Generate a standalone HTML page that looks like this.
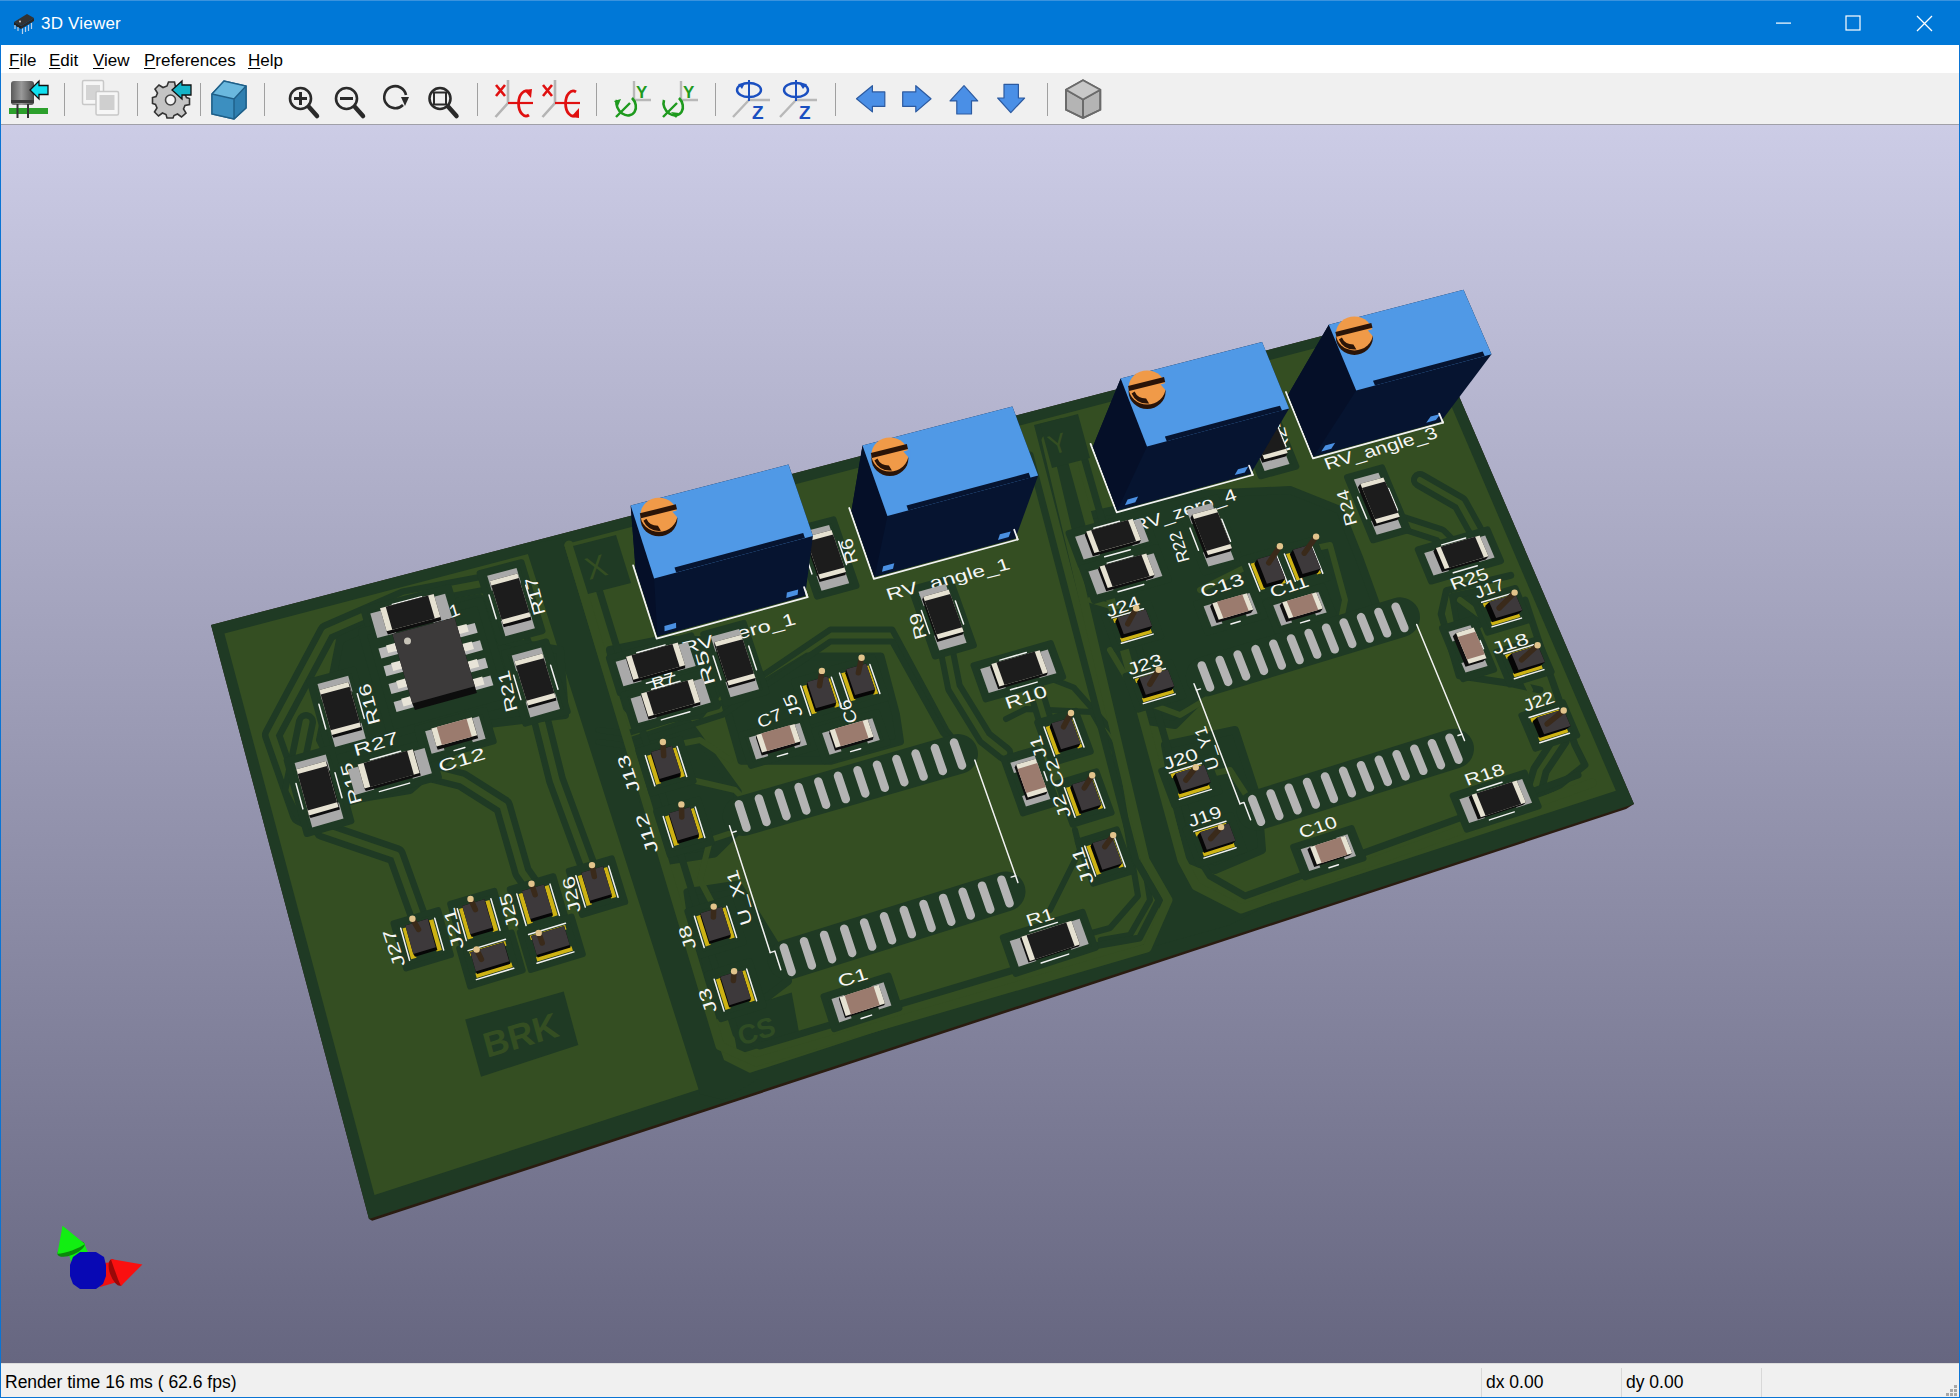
<!DOCTYPE html><html><head><meta charset="utf-8"><style>*{margin:0;padding:0;box-sizing:border-box}
html,body{width:1960px;height:1398px;overflow:hidden;background:#0a74d4;font-family:"Liberation Sans",sans-serif}
#title{position:absolute;left:0;top:0;width:1960px;height:45px;background:#0078d7;border-top:1px solid #3a93de}
#title .tt{position:absolute;left:41px;top:13px;font-size:17px;color:#fff;letter-spacing:0.2px}
#menu{position:absolute;left:1px;top:45px;width:1958px;height:28px;background:#fff}
#menu span{position:absolute;top:6px;font-size:17px;color:#000}
#menu u{text-decoration:underline;text-underline-offset:2px;text-decoration-thickness:1px}
#tool{position:absolute;left:1px;top:73px;width:1958px;height:51px;background:#f0f0f0}
#tool .s{position:absolute;top:10px;width:1px;height:33px;background:#a0a0a0}
#tool svg{position:absolute}
#canvas{position:absolute;left:1px;top:124px;width:1958px;height:1239px;background:linear-gradient(to bottom,#cccce6 0%,#666680 100%);border-top:1px solid #a0a0a8;overflow:hidden}
#canvas svg.scene{position:absolute;left:-1px;top:-125px}
#status{position:absolute;left:1px;top:1363px;width:1958px;height:34px;background:#f0f0f0;border-top:1px solid #dcdcdc}
#status span{position:absolute;top:8px;font-size:17.5px;color:#000}
#status .sep{position:absolute;top:4px;width:1px;height:29px;background:#d8d8d8}
</style></head><body><div id="title">
  <svg style="position:absolute;left:13px;top:11px" width="24" height="24" viewBox="0 0 24 24">
    <path d="M1 10 L14 2 L21 6 L8 14 Z" fill="#333"/>
    <path d="M1 10 L8 14 L8 17 L1 13 Z" fill="#222"/>
    <path d="M8 14 L21 6 L21 9 L8 17 Z" fill="#2a2a2a"/>
    <circle cx="7" cy="9.5" r="0.9" fill="#ddd"/>
    <g stroke="#b8d0ea" stroke-width="1.2">
      <line x1="2" y1="13" x2="2" y2="17"/><line x1="9.5" y1="16.5" x2="9.5" y2="22"/>
      <line x1="12.5" y1="15" x2="12.5" y2="20"/><line x1="15.5" y1="13" x2="15.5" y2="19"/>
      <line x1="18.5" y1="11" x2="18.5" y2="17"/><line x1="5" y1="15" x2="5" y2="19"/>
    </g>
  </svg>
  <span class="tt">3D Viewer</span>
  <svg style="position:absolute;left:1776px;top:21px" width="16" height="3"><rect x="0" y="0.5" width="15" height="1.2" fill="#fff"/></svg>
  <svg style="position:absolute;left:1845px;top:14px" width="17" height="17"><rect x="1" y="1" width="14" height="14" fill="none" stroke="#fff" stroke-width="1.2"/></svg>
  <svg style="position:absolute;left:1916px;top:14px" width="17" height="17"><path d="M1 1 L16 16 M16 1 L1 16" stroke="#fff" stroke-width="1.3"/></svg>
</div>
<div id="menu">
  <span style="left:8px"><u>F</u>ile</span>
  <span style="left:48px"><u>E</u>dit</span>
  <span style="left:92px"><u>V</u>iew</span>
  <span style="left:143px"><u>P</u>references</span>
  <span style="left:247px"><u>H</u>elp</span>
</div>
<div id="tool">
<svg style="left:0;top:0" width="1958" height="51" viewBox="1 73 1958 51">
 <g fill="#a0a0a0">
  <rect x="64" y="83" width="1" height="33"/><rect x="137" y="83" width="1" height="33"/>
  <rect x="200" y="83" width="1" height="33"/><rect x="264" y="83" width="1" height="33"/>
  <rect x="477" y="83" width="1" height="33"/><rect x="596" y="83" width="1" height="33"/>
  <rect x="715" y="83" width="1" height="33"/><rect x="835" y="83" width="1" height="33"/>
  <rect x="1047" y="83" width="1" height="33"/>
 </g>
 <!-- load 3d model -->
 <defs>
  <linearGradient id="cyl" x1="0" x2="1"><stop offset="0" stop-color="#5a5a5a"/><stop offset="0.45" stop-color="#9a9a9a"/><stop offset="1" stop-color="#4a4a4a"/></linearGradient>
  <linearGradient id="cubeg" x1="0" y1="0" x2="1" y2="1"><stop offset="0" stop-color="#6ab4dc"/><stop offset="1" stop-color="#2c7fb0"/></linearGradient>
 </defs>
 <rect x="11" y="81" width="23" height="24" rx="3" fill="url(#cyl)"/>
 <rect x="11" y="100" width="23" height="3" fill="#3a3a3a"/>
 <rect x="9" y="108" width="39" height="6" fill="#2ca02c"/>
 <rect x="16.5" y="104" width="2" height="14" fill="#333"/><rect x="27" y="104" width="2" height="14" fill="#333"/>
 <path d="M30 90 L39 81 L39 85.5 L48 85.5 L48 94.5 L39 94.5 L39 99 Z" fill="#10e0f0" stroke="#111" stroke-width="1.3"/>
 <!-- copy -->
 <rect x="82.5" y="80.5" width="21" height="24" rx="1.5" fill="#f6f6f6" stroke="#c8c8c8" stroke-width="1.5"/>
 <rect x="86" y="85" width="14" height="15" fill="#d4d4d4"/>
 <rect x="96" y="91.5" width="22.5" height="23.5" rx="1.5" fill="#f6f6f6" stroke="#c8c8c8" stroke-width="1.5"/>
 <rect x="99.5" y="95" width="15" height="15" fill="#cfcfcf"/>
 <!-- gear -->
 <g transform="translate(171.5,99)">
  <path d="M-3,-17 L3,-17 L4,-12 L8,-10.5 L12.5,-13.5 L16.5,-9.5 L13.5,-5 L15,-1.5 L18,-0.5 L18,5.5 L13.5,6.5 L12,10 L14.5,14 L10,18 L6,15 L2.5,16.5 L1.5,19 L-4.5,19 L-5.5,15.5 L-9,14 L-13,17 L-17,13 L-14.5,9 L-16,5.5 L-19,4.5 L-19,-1.5 L-15.5,-2.5 L-14,-6 L-16.5,-10 L-12.5,-14 L-8.5,-11.5 L-4.5,-13 Z" fill="#c4c4c4" stroke="#333" stroke-width="1.6"/>
  <circle cx="-1" cy="1" r="5" fill="#f4f4f4" stroke="#444" stroke-width="1.6"/>
 </g>
 <path d="M172 90 L182 81 L182 85 L191 85 L191 95 L182 95 L182 99 Z" fill="#14b4c8" stroke="#111" stroke-width="1.3"/>
 <!-- cube -->
 <path d="M212 94 L224 81 L246 86 L246 108 L234 119 L212 114 Z" fill="#4aa0d0" stroke="#236a94" stroke-width="1.5"/>
 <path d="M212 94 L234 99 L246 86 M234 99 L234 119" fill="none" stroke="#236a94" stroke-width="1.5"/>
 <path d="M212 94 L234 99 L234 119 L212 114 Z" fill="#3c8fc0"/>
 <path d="M234 99 L246 86 L246 108 L234 119 Z" fill="#2f7fb0"/>
 <path d="M212 94 L224 81 L246 86 L234 99 Z" fill="#6ab8de"/>
 <path d="M212 94 L224 81 L246 86 L246 108 L234 119 L212 114 Z M212 94 L234 99 L246 86 M234 99 L234 119" fill="none" stroke="#1f5f88" stroke-width="1.4"/>
 <!-- zoom icons -->
 <g fill="none" stroke="#2a2a2a" stroke-width="2.6">
  <circle cx="300.5" cy="98.5" r="10.5"/><path d="M294 98.5 H307 M300.5 92 V105" stroke-width="3"/>
  <circle cx="346.5" cy="98.5" r="10.5"/><path d="M340 98.5 H353" stroke-width="3"/>
  <path d="M403 105 A 11 11 0 1 1 406 95"/>
  <circle cx="440" cy="98.5" r="10.5"/><rect x="434" y="92.5" width="12" height="12" stroke-width="2"/>
 </g>
 <path d="M401 97 L409 97 L405 106 Z" fill="#2a2a2a"/>
 <g stroke="#2a2a2a" stroke-width="4.5" stroke-linecap="round">
  <line x1="309" y1="107" x2="317" y2="116"/><line x1="355" y1="107" x2="363" y2="116"/><line x1="448.5" y1="107" x2="456.5" y2="116"/>
 </g>
 <!-- rot X -->
 <g>
  <path d="M508 80 V103 L495.5 117" stroke="#b4b4b4" stroke-width="2.6" fill="none"/>
  <path d="M496 85 L505 96 M505 85 L496 96" stroke="#e01010" stroke-width="2.6"/>
  <path d="M508 103 H533" stroke="#e01010" stroke-width="2.2"/>
  <path d="M529 92 A 7.5 12.5 0 1 0 529 115" fill="none" stroke="#e01010" stroke-width="2.8"/>
  <path d="M524 90 L532 89 L531 98 Z" fill="#e01010"/>
  <path d="M555 80 V103 L542.5 117" stroke="#b4b4b4" stroke-width="2.6" fill="none"/>
  <path d="M543 85 L552 96 M552 85 L543 96" stroke="#e01010" stroke-width="2.6"/>
  <path d="M555 103 H580" stroke="#e01010" stroke-width="2.2"/>
  <path d="M576 92 A 7.5 12.5 0 1 0 576 115" fill="none" stroke="#e01010" stroke-width="2.8"/>
  <path d="M571 117 L579 108 L579 118 Z" fill="#e01010"/>
 </g>
 <!-- rot Y -->
 <g>
  <path d="M634 81 V100 H651" stroke="#b8b8b8" stroke-width="2.4" fill="none"/>
  <text x="636" y="97.5" font-size="17" font-weight="bold" fill="#1e9a1e" font-family="Liberation Sans">Y</text>
  <path d="M617 100 A 9 11 -35 1 0 632 98" fill="none" stroke="#1e9a1e" stroke-width="2.6"/>
  <line x1="616" y1="117" x2="630" y2="103" stroke="#1e9a1e" stroke-width="2.4"/>
  <path d="M614 101 L621 99 L618 106 Z" fill="#1e9a1e"/>
  <path d="M681 81 V100 H698" stroke="#b8b8b8" stroke-width="2.4" fill="none"/>
  <text x="683" y="97.5" font-size="17" font-weight="bold" fill="#1e9a1e" font-family="Liberation Sans">Y</text>
  <path d="M664 100 A 9 11 -35 1 0 679 98" fill="none" stroke="#1e9a1e" stroke-width="2.6"/>
  <line x1="663" y1="117" x2="677" y2="103" stroke="#1e9a1e" stroke-width="2.4"/>
  <path d="M671 112 L679 113 L676 118 Z" fill="#1e9a1e"/>
 </g>
 <!-- rot Z -->
 <g>
  <path d="M749 100 H770 M749 100 L733 117" stroke="#b8b8b8" stroke-width="2.4" fill="none"/>
  <ellipse cx="749" cy="90" rx="12" ry="7" fill="none" stroke="#1a4fc0" stroke-width="2.4"/>
  <line x1="749" y1="80" x2="749" y2="101" stroke="#1a4fc0" stroke-width="2"/>
  <path d="M738 84 L745 83 L742 89 Z" fill="#1a4fc0"/>
  <text x="752" y="118.5" font-size="19" font-weight="bold" fill="#1a4fc0" font-family="Liberation Sans">Z</text>
  <path d="M796 100 H817 M796 100 L780 117" stroke="#b8b8b8" stroke-width="2.4" fill="none"/>
  <ellipse cx="796" cy="90" rx="12" ry="7" fill="none" stroke="#1a4fc0" stroke-width="2.4"/>
  <line x1="796" y1="80" x2="796" y2="101" stroke="#1a4fc0" stroke-width="2"/>
  <path d="M799 83 L807 84 L803 89 Z" fill="#1a4fc0"/>
  <text x="799" y="118.5" font-size="19" font-weight="bold" fill="#1a4fc0" font-family="Liberation Sans">Z</text>
 </g>
 <!-- arrows -->
 <g fill="#4a8fe6" stroke="#2c5aa0" stroke-width="1.2" stroke-linejoin="round">
  <path d="M856.5 98.8 L872.4 85.7 L872.4 91.9 L884.8 91.9 L884.8 106.4 L872.4 106.4 L872.4 111.9 Z"/>
  <path d="M931 98.8 L915.8 85.7 L915.8 91.9 L902.7 91.9 L902.7 106.4 L915.8 106.4 L915.8 111.9 Z"/>
  <path d="M964 85.7 L950 100.9 L956.8 100.9 L956.8 114 L971.5 114 L971.5 100.9 L977.7 100.9 Z"/>
  <path d="M1010.8 112.6 L997.7 98 L1004 98 L1004 84.3 L1018.4 84.3 L1018.4 98 L1024.6 98 Z"/>
 </g>
 <!-- iso cube -->
 <path d="M1083 80.2 L1100.3 89.8 L1100.3 109.8 L1083 118 L1066 109.8 L1066 89.8 Z" fill="#b4b4b4" stroke="#6a6a6a" stroke-width="1.8"/>
 <path d="M1066 89.8 L1083 99.5 L1100.3 89.8 M1083 99.5 L1083 118" fill="none" stroke="#6a6a6a" stroke-width="1.8"/>
 <path d="M1066 89.8 L1083 80.2 L1100.3 89.8 L1083 99.5 Z" fill="#c8c8c8"/>
 <path d="M1083 80.2 L1100.3 89.8 L1100.3 109.8 L1083 118 L1066 109.8 L1066 89.8 Z M1066 89.8 L1083 99.5 L1100.3 89.8 M1083 99.5 L1083 118" fill="none" stroke="#6a6a6a" stroke-width="1.8"/>
</svg>

</div>
<div id="canvas">
<svg class="scene" width="1960" height="1398" viewBox="0 0 1960 1398"><polygon points="211.0,625.0 1422.0,310.0 1634.0,804.0 1626.1,809.1 372.2,1220.8 369.0,1219.0" fill="#2a1c10" />
<polygon points="211.0,625.0 1422.0,310.0 1634.0,804.0 369.0,1219.0" fill="#1f3a24" />
<polygon points="224.4,633.4 1415.4,322.1 1615.9,790.8 374.5,1195.1" fill="#344e22" />
<polygon points="525.0,545.0 562.0,538.0 706.0,1008.0 724.0,1060.0 760.0,1078.0 724.0,1100.0 700.0,1094.0" fill="#1f3a24" />
<polygon points="1034.0,425.0 1062.0,418.0 1188.0,880.0 1200.0,905.0 1160.0,910.0" fill="#1f3a24" />
<polygon points="629.5,741.5 687.5,722.2 737.7,791.7 738.0,830.4 714.5,853.5 664.3,861.3 645.0,807.2" fill="#1f3a24" stroke="#1f3a24" stroke-width="8" stroke-linejoin="round"/>
<polygon points="687.5,892.2 737.7,884.5 776.3,946.3 788.0,981.0 753.0,1008.0 714.5,1015.8 699.0,969.5" fill="#1f3a24" stroke="#1f3a24" stroke-width="8" stroke-linejoin="round"/>
<polygon points="726.0,706.8 807.2,656.6 880.6,656.6 896.0,714.5 900.0,741.5 830.4,760.8 741.5,760.8" fill="#1f3a24" stroke="#1f3a24" stroke-width="8" stroke-linejoin="round"/>
<polygon points="610.0,650.0 660.0,640.0 700.0,640.0 720.0,690.0 700.0,715.0 640.0,722.0 620.0,700.0" fill="#1f3a24" stroke="#1f3a24" stroke-width="8" stroke-linejoin="round"/>
<polygon points="730.0,1012.0 791.7,992.6 799.5,1035.0 737.7,1054.4" fill="#1f3a24" />
<polyline points="598.6,729.9 625.7,733.8 722.2,702.9 830.4,629.5 892.2,629.5 946.3,730.0 969.5,760.8" fill="none" stroke="#1f3a24" stroke-width="6" stroke-linejoin="round" stroke-linecap="round" />
<polyline points="598.6,741.9 625.7,745.8 722.2,714.9 830.4,641.5 892.2,641.5 942.7,732.4 969.5,760.8" fill="none" stroke="#1f3a24" stroke-width="6" stroke-linejoin="round" stroke-linecap="round" />
<polyline points="1100.7,940.0 1130.0,935.0 1150.0,899.9 1125.0,745.4 1073.7,687.5 1004.2,660.4" fill="none" stroke="#1f3a24" stroke-width="6" stroke-linejoin="round" stroke-linecap="round" />
<polyline points="1030.0,950.0 1110.0,928.0 1138.0,896.0 1114.0,750.0 1092.0,712.0 1026.0,709.0 1006.0,719.0" fill="none" stroke="#1f3a24" stroke-width="6" stroke-linejoin="round" stroke-linecap="round" />
<polyline points="1050.0,910.0 1080.0,850.0 1075.0,830.0" fill="none" stroke="#1f3a24" stroke-width="6" stroke-linejoin="round" stroke-linecap="round" />
<polyline points="946.3,648.8 954.0,687.5 984.9,737.7 1004.2,753.0" fill="none" stroke="#1f3a24" stroke-width="18" stroke-linejoin="round" stroke-linecap="round" />
<polyline points="946.3,648.8 954.0,687.5 984.9,737.7 1004.2,753.0" fill="none" stroke="#344e22" stroke-width="6" stroke-linejoin="round" stroke-linecap="round" />
<polyline points="1035.0,687.5 1046.7,726.0" fill="none" stroke="#1f3a24" stroke-width="18" stroke-linejoin="round" stroke-linecap="round" />
<polyline points="1035.0,687.5 1046.7,726.0" fill="none" stroke="#344e22" stroke-width="6" stroke-linejoin="round" stroke-linecap="round" />
<polyline points="640.0,752.0 700.0,740.0 730.0,760.0" fill="none" stroke="#344e22" stroke-width="6" stroke-linejoin="round" stroke-linecap="round" />
<polyline points="683.0,778.0 735.0,790.0 745.0,800.0" fill="none" stroke="#344e22" stroke-width="6" stroke-linejoin="round" stroke-linecap="round" />
<polyline points="740.0,830.0 710.0,840.0 700.0,880.0 720.0,918.0" fill="none" stroke="#344e22" stroke-width="6" stroke-linejoin="round" stroke-linecap="round" />
<polygon points="1070.0,520.0 1180.0,495.0 1290.0,490.0 1340.0,510.0 1360.0,560.0 1380.0,615.0 1400.0,625.0 1205.0,676.0 1200.0,700.0 1175.0,725.0 1140.0,720.0 1110.0,650.0 1080.0,580.0" fill="#1f3a24" stroke="#1f3a24" stroke-width="8" stroke-linejoin="round"/>
<polygon points="1165.0,745.0 1235.0,730.0 1258.0,800.0 1262.0,850.0 1215.0,870.0 1190.0,860.0 1175.0,800.0" fill="#1f3a24" stroke="#1f3a24" stroke-width="8" stroke-linejoin="round"/>
<polyline points="1510.7,575.3 1446.4,590.7 1441.2,613.9 1459.2,675.7 1510.7,683.5 1540.0,690.0" fill="none" stroke="#1f3a24" stroke-width="7" stroke-linejoin="round" stroke-linecap="round" />
<polyline points="1525.0,600.0 1545.0,660.0 1575.0,745.0 1585.0,765.0 1560.0,785.0 1534.0,796.8" fill="none" stroke="#1f3a24" stroke-width="7" stroke-linejoin="round" stroke-linecap="round" />
<polyline points="1554.5,737.5 1534.0,768.4 1526.2,794.2" fill="none" stroke="#1f3a24" stroke-width="7" stroke-linejoin="round" stroke-linecap="round" />
<polyline points="1566.0,742.0 1546.0,772.0 1540.0,796.0" fill="none" stroke="#1f3a24" stroke-width="7" stroke-linejoin="round" stroke-linecap="round" />
<polygon points="1452.0,596.0 1480.0,590.0 1486.0,620.0 1460.0,640.0" fill="#1f3a24" stroke="#1f3a24" stroke-width="6" stroke-linejoin="round"/>
<polyline points="1420.0,480.0 1460.0,503.0 1475.0,530.0 1478.0,545.0" fill="none" stroke="#1f3a24" stroke-width="18" stroke-linejoin="round" stroke-linecap="round" />
<polyline points="1420.0,480.0 1460.0,503.0 1475.0,530.0 1478.0,545.0" fill="none" stroke="#344e22" stroke-width="6" stroke-linejoin="round" stroke-linecap="round" />
<polyline points="1400.0,522.0 1440.0,535.0 1455.0,550.0" fill="none" stroke="#1f3a24" stroke-width="18" stroke-linejoin="round" stroke-linecap="round" />
<polyline points="1400.0,522.0 1440.0,535.0 1455.0,550.0" fill="none" stroke="#344e22" stroke-width="6" stroke-linejoin="round" stroke-linecap="round" />
<polygon points="1080.0,967.0 1147.0,948.0 1168.0,900.0 1145.0,860.0 1046.0,440.0 1064.0,430.0 1182.0,860.0 1196.0,886.0 1241.0,909.0 1290.0,893.0 1230.0,925.0" fill="#1f3a24" />
<polyline points="569.0,545.0 720.0,1046.0 756.0,1062.0 1147.0,948.0 1168.0,900.0 1145.0,860.0 1046.0,440.0" fill="none" stroke="#344e22" stroke-width="9" stroke-linejoin="round" stroke-linecap="round" />
<polyline points="590.0,560.0 736.0,1034.0 760.0,1046.0 1094.0,946.0 1139.5,938.0 1159.0,900.0 1135.8,860.0 1030.0,455.0" fill="none" stroke="#1f3a24" stroke-width="7" stroke-linejoin="round" stroke-linecap="round" />
<polyline points="1064.0,430.0 1182.0,860.0 1196.0,886.0 1241.0,909.0 1592.0,783.0" fill="none" stroke="#344e22" stroke-width="9" stroke-linejoin="round" stroke-linecap="round" />
<polyline points="1082.0,450.0 1200.0,860.0 1210.0,876.0 1245.0,896.0 1578.0,775.0" fill="none" stroke="#1f3a24" stroke-width="7" stroke-linejoin="round" stroke-linecap="round" />
<polyline points="1090.0,600.0 1130.0,612.0" fill="none" stroke="#344e22" stroke-width="6" stroke-linejoin="round" stroke-linecap="round" />
<polyline points="1110.0,650.0 1140.0,700.0 1180.0,715.0 1205.0,700.0" fill="none" stroke="#344e22" stroke-width="6" stroke-linejoin="round" stroke-linecap="round" />
<polyline points="1200.0,590.0 1260.0,560.0 1330.0,545.0 1345.0,600.0 1340.0,625.0" fill="none" stroke="#344e22" stroke-width="6" stroke-linejoin="round" stroke-linecap="round" />
<polyline points="1180.0,780.0 1230.0,770.0 1256.0,810.0" fill="none" stroke="#344e22" stroke-width="6" stroke-linejoin="round" stroke-linecap="round" />
<polyline points="1460.0,600.0 1500.0,630.0 1530.0,690.0" fill="none" stroke="#344e22" stroke-width="6" stroke-linejoin="round" stroke-linecap="round" />
<polygon points="573.0,546.0 616.0,535.0 631.0,583.0 588.0,594.0" fill="#1f3a24" />
<text x="0" y="0" font-family="Liberation Sans" font-size="30" fill="#344e22" transform="matrix(1,-0.27,0.3,1,589,580)">X</text>
<polygon points="1040.0,424.0 1078.0,414.0 1090.0,458.0 1052.0,468.0" fill="#1f3a24" />
<text x="0" y="0" font-family="Liberation Sans" font-size="26" fill="#344e22" transform="matrix(1,-0.27,0.33,1,1052,455)">Y</text>
<polygon points="465.2,1019.5 563.7,991.6 578.3,1045.0 481.0,1076.7" fill="#1f3a24" />
<text x="0" y="0" font-family="Liberation Sans" font-weight="bold" font-size="34" fill="#344e22" transform="matrix(1,-0.3,0.27,1,487,1058)">BRK</text>
<text x="0" y="0" font-family="Liberation Sans" font-weight="bold" font-size="26" fill="#2f4c24" transform="matrix(1,-0.33,0.3,1,741,1046)">CS</text>
<polyline points="323.0,826.0 300.0,815.0 272.0,735.0 327.0,632.0 405.0,598.0 490.0,582.0 510.0,590.0" fill="none" stroke="#1f3a24" stroke-width="20" stroke-linejoin="round" stroke-linecap="round" />
<polyline points="323.0,826.0 300.0,815.0 272.0,735.0 327.0,632.0 405.0,598.0 490.0,582.0 510.0,590.0" fill="none" stroke="#344e22" stroke-width="7" stroke-linejoin="round" stroke-linecap="round" />
<polyline points="306.0,722.0 292.0,790.0 303.0,812.0" fill="none" stroke="#1f3a24" stroke-width="20" stroke-linejoin="round" stroke-linecap="round" />
<polyline points="306.0,722.0 292.0,790.0 303.0,812.0" fill="none" stroke="#344e22" stroke-width="7" stroke-linejoin="round" stroke-linecap="round" />
<polyline points="323.0,830.0 396.0,855.0 418.0,916.0 422.0,930.0" fill="none" stroke="#1f3a24" stroke-width="20" stroke-linejoin="round" stroke-linecap="round" />
<polyline points="323.0,830.0 396.0,855.0 418.0,916.0 422.0,930.0" fill="none" stroke="#344e22" stroke-width="7" stroke-linejoin="round" stroke-linecap="round" />
<polyline points="430.0,772.0 462.0,780.0 503.0,806.0 522.0,872.0 536.0,892.0" fill="none" stroke="#1f3a24" stroke-width="20" stroke-linejoin="round" stroke-linecap="round" />
<polyline points="430.0,772.0 462.0,780.0 503.0,806.0 522.0,872.0 536.0,892.0" fill="none" stroke="#344e22" stroke-width="7" stroke-linejoin="round" stroke-linecap="round" />
<polyline points="540.0,716.0 556.0,780.0 590.0,872.0 597.0,886.0" fill="none" stroke="#1f3a24" stroke-width="20" stroke-linejoin="round" stroke-linecap="round" />
<polyline points="540.0,716.0 556.0,780.0 590.0,872.0 597.0,886.0" fill="none" stroke="#344e22" stroke-width="7" stroke-linejoin="round" stroke-linecap="round" />
<polyline points="515.0,625.0 530.0,665.0" fill="none" stroke="#1f3a24" stroke-width="20" stroke-linejoin="round" stroke-linecap="round" />
<polyline points="515.0,625.0 530.0,665.0" fill="none" stroke="#344e22" stroke-width="7" stroke-linejoin="round" stroke-linecap="round" />
<polygon points="340.0,640.0 400.0,612.0 480.0,598.0 500.0,640.0 560.0,650.0 565.0,715.0 480.0,725.0 445.0,760.0 410.0,790.0 350.0,800.0 320.0,740.0" fill="#1f3a24" stroke="#1f3a24" stroke-width="8" stroke-linejoin="round"/>
<polygon points="363.4,609.7 448.9,587.2 459.2,621.9 373.4,644.8" fill="#1f3a24" stroke="#1f3a24" stroke-width="6" stroke-linejoin="round"/>
<polygon points="362.1,632.2 391.2,734.6 509.8,701.7 479.7,601.1" fill="#1f3a24" stroke="#1f3a24" stroke-width="8" stroke-linejoin="round"/>
<polygon points="479.6,573.1 500.4,642.4 542.5,631.0 521.5,562.2" fill="#1f3a24" stroke="#1f3a24" stroke-width="6" stroke-linejoin="round"/>
<polygon points="504.1,653.0 525.3,723.6 567.7,711.7 546.2,641.5" fill="#1f3a24" stroke="#1f3a24" stroke-width="6" stroke-linejoin="round"/>
<polygon points="309.7,681.4 329.6,753.5 373.7,741.3 353.5,669.6" fill="#1f3a24" stroke="#1f3a24" stroke-width="6" stroke-linejoin="round"/>
<polygon points="286.7,760.3 306.7,834.0 351.4,821.2 331.2,748.0" fill="#1f3a24" stroke="#1f3a24" stroke-width="6" stroke-linejoin="round"/>
<polygon points="340.8,765.5 428.5,741.1 438.9,777.2 350.9,802.1" fill="#1f3a24" stroke="#1f3a24" stroke-width="6" stroke-linejoin="round"/>
<polygon points="417.0,728.7 484.4,710.0 493.7,741.3 426.1,760.3" fill="#1f3a24" stroke="#1f3a24" stroke-width="6" stroke-linejoin="round"/>
<polygon points="393.5,923.4 406.1,968.5 450.9,955.0 438.1,910.1" fill="#1f3a24" stroke="#1f3a24" stroke-width="6" stroke-linejoin="round"/>
<polygon points="450.2,903.9 463.0,948.7 507.2,935.3 494.3,890.8" fill="#1f3a24" stroke="#1f3a24" stroke-width="6" stroke-linejoin="round"/>
<polygon points="509.8,889.1 522.8,933.5 566.4,920.3 553.3,876.2" fill="#1f3a24" stroke="#1f3a24" stroke-width="6" stroke-linejoin="round"/>
<polygon points="568.8,871.0 582.1,915.0 625.2,902.0 611.8,858.3" fill="#1f3a24" stroke="#1f3a24" stroke-width="6" stroke-linejoin="round"/>
<polygon points="459.2,948.4 511.7,932.6 522.7,970.3 470.1,986.5" fill="#1f3a24" stroke="#1f3a24" stroke-width="6" stroke-linejoin="round"/>
<polygon points="519.8,932.3 571.6,916.6 582.8,954.1 530.8,970.0" fill="#1f3a24" stroke="#1f3a24" stroke-width="6" stroke-linejoin="round"/>
<polygon points="608.9,658.1 691.3,635.4 702.5,669.9 619.8,693.0" fill="#1f3a24" stroke="#1f3a24" stroke-width="6" stroke-linejoin="round"/>
<polygon points="623.7,694.6 706.3,671.5 717.6,706.3 634.8,729.9" fill="#1f3a24" stroke="#1f3a24" stroke-width="6" stroke-linejoin="round"/>
<polygon points="703.2,634.1 725.7,703.4 766.5,691.8 743.8,622.9" fill="#1f3a24" stroke="#1f3a24" stroke-width="6" stroke-linejoin="round"/>
<polygon points="794.0,681.4 807.8,722.6 848.0,711.0 834.1,670.0" fill="#1f3a24" stroke="#1f3a24" stroke-width="6" stroke-linejoin="round"/>
<polygon points="832.8,668.6 846.7,709.5 886.6,698.0 872.6,657.3" fill="#1f3a24" stroke="#1f3a24" stroke-width="6" stroke-linejoin="round"/>
<polygon points="741.0,735.0 804.7,716.7 814.9,747.3 751.0,765.9" fill="#1f3a24" stroke="#1f3a24" stroke-width="6" stroke-linejoin="round"/>
<polygon points="814.3,730.4 877.1,712.2 887.6,742.6 824.6,761.1" fill="#1f3a24" stroke="#1f3a24" stroke-width="6" stroke-linejoin="round"/>
<polygon points="638.4,750.9 651.7,793.3 693.6,781.1 680.1,738.9" fill="#1f3a24" stroke="#1f3a24" stroke-width="6" stroke-linejoin="round"/>
<polygon points="656.2,811.7 669.7,854.8 711.8,842.3 698.2,799.4" fill="#1f3a24" stroke="#1f3a24" stroke-width="6" stroke-linejoin="round"/>
<polygon points="687.4,911.3 701.2,955.5 743.6,942.3 729.7,898.4" fill="#1f3a24" stroke="#1f3a24" stroke-width="6" stroke-linejoin="round"/>
<polygon points="707.1,974.4 721.1,1019.2 763.7,1005.6 749.6,961.1" fill="#1f3a24" stroke="#1f3a24" stroke-width="6" stroke-linejoin="round"/>
<polygon points="823.5,996.3 888.5,975.5 899.4,1008.1 834.2,1029.2" fill="#1f3a24" stroke="#1f3a24" stroke-width="6" stroke-linejoin="round"/>
<polygon points="1002.8,937.3 1082.6,911.8 1095.6,947.9 1015.6,973.8" fill="#1f3a24" stroke="#1f3a24" stroke-width="6" stroke-linejoin="round"/>
<polygon points="1003.4,758.8 1022.9,813.4 1057.2,802.9 1037.6,748.5" fill="#1f3a24" stroke="#1f3a24" stroke-width="6" stroke-linejoin="round"/>
<polygon points="1037.2,722.4 1052.0,763.3 1090.8,751.6 1075.8,710.9" fill="#1f3a24" stroke="#1f3a24" stroke-width="6" stroke-linejoin="round"/>
<polygon points="1057.6,783.1 1072.7,824.7 1111.6,812.7 1096.4,771.3" fill="#1f3a24" stroke="#1f3a24" stroke-width="6" stroke-linejoin="round"/>
<polygon points="1077.8,841.5 1093.1,883.7 1132.2,871.3 1116.8,829.4" fill="#1f3a24" stroke="#1f3a24" stroke-width="6" stroke-linejoin="round"/>
<polygon points="794.2,529.7 817.0,596.6 856.5,585.8 833.5,519.3" fill="#1f3a24" stroke="#1f3a24" stroke-width="6" stroke-linejoin="round"/>
<polygon points="911.2,589.1 934.9,656.5 973.9,645.4 950.0,578.4" fill="#1f3a24" stroke="#1f3a24" stroke-width="6" stroke-linejoin="round"/>
<polygon points="973.5,665.3 1050.7,643.1 1063.1,676.9 985.7,699.4" fill="#1f3a24" stroke="#1f3a24" stroke-width="6" stroke-linejoin="round"/>
<polygon points="1068.6,533.1 1143.0,512.6 1155.4,544.9 1080.8,565.7" fill="#1f3a24" stroke="#1f3a24" stroke-width="6" stroke-linejoin="round"/>
<polygon points="1081.9,567.9 1156.4,547.1 1168.9,579.7 1094.2,600.9" fill="#1f3a24" stroke="#1f3a24" stroke-width="6" stroke-linejoin="round"/>
<polygon points="1179.4,507.6 1204.5,572.3 1241.1,561.9 1215.8,497.6" fill="#1f3a24" stroke="#1f3a24" stroke-width="6" stroke-linejoin="round"/>
<polygon points="1242.4,559.3 1257.6,597.9 1294.0,587.3 1278.7,549.0" fill="#1f3a24" stroke="#1f3a24" stroke-width="6" stroke-linejoin="round"/>
<polygon points="1277.9,549.7 1293.2,588.1 1329.3,577.7 1313.9,539.5" fill="#1f3a24" stroke="#1f3a24" stroke-width="6" stroke-linejoin="round"/>
<polygon points="1196.2,603.7 1253.6,587.2 1264.9,615.8 1207.4,632.6" fill="#1f3a24" stroke="#1f3a24" stroke-width="6" stroke-linejoin="round"/>
<polygon points="1265.9,602.8 1322.5,586.4 1334.0,614.8 1277.2,631.5" fill="#1f3a24" stroke="#1f3a24" stroke-width="6" stroke-linejoin="round"/>
<polygon points="1103.9,615.8 1148.5,603.1 1161.1,636.2 1116.4,649.1" fill="#1f3a24" stroke="#1f3a24" stroke-width="6" stroke-linejoin="round"/>
<polygon points="1125.6,675.8 1170.4,662.6 1183.2,696.2 1138.3,709.6" fill="#1f3a24" stroke="#1f3a24" stroke-width="6" stroke-linejoin="round"/>
<polygon points="1347.0,477.1 1373.0,540.3 1408.3,530.2 1382.1,467.3" fill="#1f3a24" stroke="#1f3a24" stroke-width="6" stroke-linejoin="round"/>
<polygon points="1417.8,549.5 1487.5,529.4 1501.0,561.0 1431.1,581.5" fill="#1f3a24" stroke="#1f3a24" stroke-width="6" stroke-linejoin="round"/>
<polygon points="1474.1,600.3 1515.4,588.0 1529.1,620.1 1487.6,632.6" fill="#1f3a24" stroke="#1f3a24" stroke-width="6" stroke-linejoin="round"/>
<polygon points="1442.0,628.0 1463.1,679.1 1494.1,669.6 1472.8,618.8" fill="#1f3a24" stroke="#1f3a24" stroke-width="6" stroke-linejoin="round"/>
<polygon points="1496.2,651.8 1537.7,639.1 1551.6,671.6 1509.9,684.5" fill="#1f3a24" stroke="#1f3a24" stroke-width="6" stroke-linejoin="round"/>
<polygon points="1521.4,715.4 1563.1,702.4 1577.2,735.4 1535.4,748.6" fill="#1f3a24" stroke="#1f3a24" stroke-width="6" stroke-linejoin="round"/>
<polygon points="1452.7,795.6 1524.6,772.6 1538.6,806.4 1466.7,829.7" fill="#1f3a24" stroke="#1f3a24" stroke-width="6" stroke-linejoin="round"/>
<polygon points="1161.3,770.9 1206.4,757.1 1219.5,791.5 1174.3,805.5" fill="#1f3a24" stroke="#1f3a24" stroke-width="6" stroke-linejoin="round"/>
<polygon points="1185.7,829.3 1231.0,815.1 1244.2,849.9 1198.9,864.4" fill="#1f3a24" stroke="#1f3a24" stroke-width="6" stroke-linejoin="round"/>
<polygon points="1293.2,846.8 1351.6,828.1 1363.5,858.4 1305.0,877.4" fill="#1f3a24" stroke="#1f3a24" stroke-width="6" stroke-linejoin="round"/>
<polygon points="1235.7,413.6 1260.8,476.3 1296.4,466.5 1271.2,404.1" fill="#1f3a24" stroke="#1f3a24" stroke-width="6" stroke-linejoin="round"/>
<polyline points="742.7,816.0 958.0,754.0" fill="none" stroke="#1f3a24" stroke-width="40" stroke-linejoin="round" stroke-linecap="round" stroke-linecap="round"/>
<polyline points="787.7,959.7 1005.5,891.5" fill="none" stroke="#1f3a24" stroke-width="40" stroke-linejoin="round" stroke-linecap="round" stroke-linecap="round"/>
<polyline points="1205.9,676.4 1400.0,617.3" fill="none" stroke="#1f3a24" stroke-width="40" stroke-linejoin="round" stroke-linecap="round" stroke-linecap="round"/>
<polyline points="1256.6,810.4 1454.0,748.7" fill="none" stroke="#1f3a24" stroke-width="40" stroke-linejoin="round" stroke-linecap="round" stroke-linecap="round"/>
<polyline points="738.9,804.2 746.5,827.8" fill="none" stroke="#b4b4b4" stroke-width="8.5" stroke-linejoin="round" stroke-linecap="round" />
<polyline points="758.9,798.5 766.5,822.0" fill="none" stroke="#b4b4b4" stroke-width="8.5" stroke-linejoin="round" stroke-linecap="round" />
<polyline points="778.8,792.8 786.5,816.2" fill="none" stroke="#b4b4b4" stroke-width="8.5" stroke-linejoin="round" stroke-linecap="round" />
<polyline points="798.6,787.1 806.3,810.5" fill="none" stroke="#b4b4b4" stroke-width="8.5" stroke-linejoin="round" stroke-linecap="round" />
<polyline points="818.3,781.5 826.1,804.8" fill="none" stroke="#b4b4b4" stroke-width="8.5" stroke-linejoin="round" stroke-linecap="round" />
<polyline points="838.0,775.8 845.8,799.1" fill="none" stroke="#b4b4b4" stroke-width="8.5" stroke-linejoin="round" stroke-linecap="round" />
<polyline points="857.5,770.2 865.3,793.4" fill="none" stroke="#b4b4b4" stroke-width="8.5" stroke-linejoin="round" stroke-linecap="round" />
<polyline points="877.0,764.7 884.8,787.8" fill="none" stroke="#b4b4b4" stroke-width="8.5" stroke-linejoin="round" stroke-linecap="round" />
<polyline points="896.4,759.1 904.3,782.2" fill="none" stroke="#b4b4b4" stroke-width="8.5" stroke-linejoin="round" stroke-linecap="round" />
<polyline points="915.6,753.6 923.6,776.6" fill="none" stroke="#b4b4b4" stroke-width="8.5" stroke-linejoin="round" stroke-linecap="round" />
<polyline points="934.9,748.1 942.8,771.0" fill="none" stroke="#b4b4b4" stroke-width="8.5" stroke-linejoin="round" stroke-linecap="round" />
<polyline points="954.0,742.6 962.0,765.4" fill="none" stroke="#b4b4b4" stroke-width="8.5" stroke-linejoin="round" stroke-linecap="round" />
<polyline points="783.8,947.5 791.6,971.9" fill="none" stroke="#b4b4b4" stroke-width="8.5" stroke-linejoin="round" stroke-linecap="round" />
<polyline points="804.0,941.2 811.9,965.5" fill="none" stroke="#b4b4b4" stroke-width="8.5" stroke-linejoin="round" stroke-linecap="round" />
<polyline points="824.1,934.9 832.1,959.2" fill="none" stroke="#b4b4b4" stroke-width="8.5" stroke-linejoin="round" stroke-linecap="round" />
<polyline points="844.2,928.7 852.2,952.9" fill="none" stroke="#b4b4b4" stroke-width="8.5" stroke-linejoin="round" stroke-linecap="round" />
<polyline points="864.1,922.5 872.2,946.6" fill="none" stroke="#b4b4b4" stroke-width="8.5" stroke-linejoin="round" stroke-linecap="round" />
<polyline points="884.0,916.3 892.1,940.3" fill="none" stroke="#b4b4b4" stroke-width="8.5" stroke-linejoin="round" stroke-linecap="round" />
<polyline points="903.8,910.1 911.9,934.1" fill="none" stroke="#b4b4b4" stroke-width="8.5" stroke-linejoin="round" stroke-linecap="round" />
<polyline points="923.5,904.0 931.6,927.9" fill="none" stroke="#b4b4b4" stroke-width="8.5" stroke-linejoin="round" stroke-linecap="round" />
<polyline points="943.1,897.9 951.3,921.7" fill="none" stroke="#b4b4b4" stroke-width="8.5" stroke-linejoin="round" stroke-linecap="round" />
<polyline points="962.6,891.8 970.8,915.5" fill="none" stroke="#b4b4b4" stroke-width="8.5" stroke-linejoin="round" stroke-linecap="round" />
<polyline points="982.0,885.7 990.3,909.4" fill="none" stroke="#b4b4b4" stroke-width="8.5" stroke-linejoin="round" stroke-linecap="round" />
<polyline points="1001.4,879.7 1009.6,903.3" fill="none" stroke="#b4b4b4" stroke-width="8.5" stroke-linejoin="round" stroke-linecap="round" />
<polyline points="1201.7,665.4 1210.1,687.4" fill="none" stroke="#b4b4b4" stroke-width="8.5" stroke-linejoin="round" stroke-linecap="round" />
<polyline points="1219.7,660.0 1228.2,681.9" fill="none" stroke="#b4b4b4" stroke-width="8.5" stroke-linejoin="round" stroke-linecap="round" />
<polyline points="1237.6,654.5 1246.1,676.4" fill="none" stroke="#b4b4b4" stroke-width="8.5" stroke-linejoin="round" stroke-linecap="round" />
<polyline points="1255.5,649.1 1264.0,670.9" fill="none" stroke="#b4b4b4" stroke-width="8.5" stroke-linejoin="round" stroke-linecap="round" />
<polyline points="1273.3,643.7 1281.8,665.5" fill="none" stroke="#b4b4b4" stroke-width="8.5" stroke-linejoin="round" stroke-linecap="round" />
<polyline points="1291.0,638.4 1299.6,660.0" fill="none" stroke="#b4b4b4" stroke-width="8.5" stroke-linejoin="round" stroke-linecap="round" />
<polyline points="1308.6,633.0 1317.2,654.6" fill="none" stroke="#b4b4b4" stroke-width="8.5" stroke-linejoin="round" stroke-linecap="round" />
<polyline points="1326.1,627.7 1334.8,649.3" fill="none" stroke="#b4b4b4" stroke-width="8.5" stroke-linejoin="round" stroke-linecap="round" />
<polyline points="1343.6,622.4 1352.3,643.9" fill="none" stroke="#b4b4b4" stroke-width="8.5" stroke-linejoin="round" stroke-linecap="round" />
<polyline points="1361.0,617.1 1369.7,638.6" fill="none" stroke="#b4b4b4" stroke-width="8.5" stroke-linejoin="round" stroke-linecap="round" />
<polyline points="1378.4,611.9 1387.1,633.3" fill="none" stroke="#b4b4b4" stroke-width="8.5" stroke-linejoin="round" stroke-linecap="round" />
<polyline points="1395.6,606.7 1404.4,628.0" fill="none" stroke="#b4b4b4" stroke-width="8.5" stroke-linejoin="round" stroke-linecap="round" />
<polyline points="1252.2,799.1 1261.0,821.8" fill="none" stroke="#b4b4b4" stroke-width="8.5" stroke-linejoin="round" stroke-linecap="round" />
<polyline points="1270.6,793.4 1279.3,816.0" fill="none" stroke="#b4b4b4" stroke-width="8.5" stroke-linejoin="round" stroke-linecap="round" />
<polyline points="1288.8,787.7 1297.6,810.3" fill="none" stroke="#b4b4b4" stroke-width="8.5" stroke-linejoin="round" stroke-linecap="round" />
<polyline points="1307.0,782.0 1315.8,804.5" fill="none" stroke="#b4b4b4" stroke-width="8.5" stroke-linejoin="round" stroke-linecap="round" />
<polyline points="1325.0,776.4 1333.9,798.9" fill="none" stroke="#b4b4b4" stroke-width="8.5" stroke-linejoin="round" stroke-linecap="round" />
<polyline points="1343.1,770.8 1351.9,793.2" fill="none" stroke="#b4b4b4" stroke-width="8.5" stroke-linejoin="round" stroke-linecap="round" />
<polyline points="1361.0,765.2 1369.9,787.6" fill="none" stroke="#b4b4b4" stroke-width="8.5" stroke-linejoin="round" stroke-linecap="round" />
<polyline points="1378.8,759.7 1387.8,781.9" fill="none" stroke="#b4b4b4" stroke-width="8.5" stroke-linejoin="round" stroke-linecap="round" />
<polyline points="1396.6,754.2 1405.6,776.4" fill="none" stroke="#b4b4b4" stroke-width="8.5" stroke-linejoin="round" stroke-linecap="round" />
<polyline points="1414.3,748.7 1423.3,770.8" fill="none" stroke="#b4b4b4" stroke-width="8.5" stroke-linejoin="round" stroke-linecap="round" />
<polyline points="1431.9,743.2 1440.9,765.2" fill="none" stroke="#b4b4b4" stroke-width="8.5" stroke-linejoin="round" stroke-linecap="round" />
<polyline points="1449.5,737.7 1458.5,759.7" fill="none" stroke="#b4b4b4" stroke-width="8.5" stroke-linejoin="round" stroke-linecap="round" />
<polyline points="392.3,604.4 421.6,596.7" fill="none" stroke="#f2f2f2" stroke-width="1.5" stroke-linejoin="round" stroke-linecap="round" />
<polyline points="401.1,635.0 430.6,627.2" fill="none" stroke="#f2f2f2" stroke-width="1.5" stroke-linejoin="round" stroke-linecap="round" />
<polyline points="489.0,595.0 496.2,618.8" fill="none" stroke="#f2f2f2" stroke-width="1.5" stroke-linejoin="round" stroke-linecap="round" />
<polyline points="525.7,585.3 533.0,609.0" fill="none" stroke="#f2f2f2" stroke-width="1.5" stroke-linejoin="round" stroke-linecap="round" />
<polyline points="513.6,675.3 520.9,699.6" fill="none" stroke="#f2f2f2" stroke-width="1.5" stroke-linejoin="round" stroke-linecap="round" />
<polyline points="550.6,665.2 558.0,689.3" fill="none" stroke="#f2f2f2" stroke-width="1.5" stroke-linejoin="round" stroke-linecap="round" />
<polyline points="318.9,704.2 325.8,729.0" fill="none" stroke="#f2f2f2" stroke-width="1.5" stroke-linejoin="round" stroke-linecap="round" />
<polyline points="357.3,693.8 364.3,718.4" fill="none" stroke="#f2f2f2" stroke-width="1.5" stroke-linejoin="round" stroke-linecap="round" />
<polyline points="296.0,783.5 302.9,808.9" fill="none" stroke="#f2f2f2" stroke-width="1.5" stroke-linejoin="round" stroke-linecap="round" />
<polyline points="335.0,772.7 342.0,797.8" fill="none" stroke="#f2f2f2" stroke-width="1.5" stroke-linejoin="round" stroke-linecap="round" />
<polyline points="370.4,759.7 400.6,751.3" fill="none" stroke="#f2f2f2" stroke-width="1.5" stroke-linejoin="round" stroke-linecap="round" />
<polyline points="379.4,791.6 409.6,783.1" fill="none" stroke="#f2f2f2" stroke-width="1.5" stroke-linejoin="round" stroke-linecap="round" />
<polyline points="454.1,750.6 464.9,747.5" fill="none" stroke="#f2f2f2" stroke-width="1.5" stroke-linejoin="round" stroke-linecap="round" />
<polyline points="400.7,928.3 409.6,960.4" fill="none" stroke="#f2f2f2" stroke-width="1.5" stroke-linejoin="round" stroke-linecap="round" />
<polyline points="434.7,918.2 443.7,950.1" fill="none" stroke="#f2f2f2" stroke-width="1.5" stroke-linejoin="round" stroke-linecap="round" />
<polyline points="457.3,908.8 466.4,940.6" fill="none" stroke="#f2f2f2" stroke-width="1.5" stroke-linejoin="round" stroke-linecap="round" />
<polyline points="490.9,898.8 500.1,930.4" fill="none" stroke="#f2f2f2" stroke-width="1.5" stroke-linejoin="round" stroke-linecap="round" />
<polyline points="516.8,894.0 526.1,925.5" fill="none" stroke="#f2f2f2" stroke-width="1.5" stroke-linejoin="round" stroke-linecap="round" />
<polyline points="550.0,884.1 559.4,915.4" fill="none" stroke="#f2f2f2" stroke-width="1.5" stroke-linejoin="round" stroke-linecap="round" />
<polyline points="575.9,875.8 585.3,907.1" fill="none" stroke="#f2f2f2" stroke-width="1.5" stroke-linejoin="round" stroke-linecap="round" />
<polyline points="608.6,866.1 618.1,897.2" fill="none" stroke="#f2f2f2" stroke-width="1.5" stroke-linejoin="round" stroke-linecap="round" />
<polyline points="468.1,950.6 505.5,939.3" fill="none" stroke="#f2f2f2" stroke-width="1.5" stroke-linejoin="round" stroke-linecap="round" />
<polyline points="476.4,979.6 513.8,968.2" fill="none" stroke="#f2f2f2" stroke-width="1.5" stroke-linejoin="round" stroke-linecap="round" />
<polyline points="528.6,934.5 565.5,923.3" fill="none" stroke="#f2f2f2" stroke-width="1.5" stroke-linejoin="round" stroke-linecap="round" />
<polyline points="537.0,963.2 574.0,951.9" fill="none" stroke="#f2f2f2" stroke-width="1.5" stroke-linejoin="round" stroke-linecap="round" />
<polyline points="636.8,652.7 665.1,644.9" fill="none" stroke="#f2f2f2" stroke-width="1.5" stroke-linejoin="round" stroke-linecap="round" />
<polyline points="646.4,683.2 674.8,675.3" fill="none" stroke="#f2f2f2" stroke-width="1.5" stroke-linejoin="round" stroke-linecap="round" />
<polyline points="651.7,689.2 680.1,681.2" fill="none" stroke="#f2f2f2" stroke-width="1.5" stroke-linejoin="round" stroke-linecap="round" />
<polyline points="661.4,719.9 689.9,711.8" fill="none" stroke="#f2f2f2" stroke-width="1.5" stroke-linejoin="round" stroke-linecap="round" />
<polyline points="713.1,656.0 720.9,679.8" fill="none" stroke="#f2f2f2" stroke-width="1.5" stroke-linejoin="round" stroke-linecap="round" />
<polyline points="748.7,646.1 756.5,669.8" fill="none" stroke="#f2f2f2" stroke-width="1.5" stroke-linejoin="round" stroke-linecap="round" />
<polyline points="800.7,686.0 810.5,715.3" fill="none" stroke="#f2f2f2" stroke-width="1.5" stroke-linejoin="round" stroke-linecap="round" />
<polyline points="831.4,677.3 841.3,706.4" fill="none" stroke="#f2f2f2" stroke-width="1.5" stroke-linejoin="round" stroke-linecap="round" />
<polyline points="839.5,673.1 849.4,702.2" fill="none" stroke="#f2f2f2" stroke-width="1.5" stroke-linejoin="round" stroke-linecap="round" />
<polyline points="869.9,664.5 879.9,693.5" fill="none" stroke="#f2f2f2" stroke-width="1.5" stroke-linejoin="round" stroke-linecap="round" />
<polyline points="777.4,756.4 787.6,753.5" fill="none" stroke="#f2f2f2" stroke-width="1.5" stroke-linejoin="round" stroke-linecap="round" />
<polyline points="850.6,751.6 860.7,748.7" fill="none" stroke="#f2f2f2" stroke-width="1.5" stroke-linejoin="round" stroke-linecap="round" />
<polyline points="645.3,755.6 654.8,785.7" fill="none" stroke="#f2f2f2" stroke-width="1.5" stroke-linejoin="round" stroke-linecap="round" />
<polyline points="677.1,746.4 686.7,776.4" fill="none" stroke="#f2f2f2" stroke-width="1.5" stroke-linejoin="round" stroke-linecap="round" />
<polyline points="663.2,816.5 672.8,847.1" fill="none" stroke="#f2f2f2" stroke-width="1.5" stroke-linejoin="round" stroke-linecap="round" />
<polyline points="695.2,807.1 704.8,837.5" fill="none" stroke="#f2f2f2" stroke-width="1.5" stroke-linejoin="round" stroke-linecap="round" />
<polyline points="694.4,916.2 704.2,947.5" fill="none" stroke="#f2f2f2" stroke-width="1.5" stroke-linejoin="round" stroke-linecap="round" />
<polyline points="726.7,906.3 736.6,937.4" fill="none" stroke="#f2f2f2" stroke-width="1.5" stroke-linejoin="round" stroke-linecap="round" />
<polyline points="714.2,979.3 724.1,1011.1" fill="none" stroke="#f2f2f2" stroke-width="1.5" stroke-linejoin="round" stroke-linecap="round" />
<polyline points="746.6,969.1 756.6,1000.7" fill="none" stroke="#f2f2f2" stroke-width="1.5" stroke-linejoin="round" stroke-linecap="round" />
<polyline points="861.1,1018.5 871.5,1015.1" fill="none" stroke="#f2f2f2" stroke-width="1.5" stroke-linejoin="round" stroke-linecap="round" />
<polyline points="1029.9,931.1 1057.4,922.4" fill="none" stroke="#f2f2f2" stroke-width="1.5" stroke-linejoin="round" stroke-linecap="round" />
<polyline points="1041.2,963.0 1068.7,954.1" fill="none" stroke="#f2f2f2" stroke-width="1.5" stroke-linejoin="round" stroke-linecap="round" />
<polyline points="1044.0,771.8 1047.1,780.5" fill="none" stroke="#f2f2f2" stroke-width="1.5" stroke-linejoin="round" stroke-linecap="round" />
<polyline points="1044.0,726.9 1054.5,756.0" fill="none" stroke="#f2f2f2" stroke-width="1.5" stroke-linejoin="round" stroke-linecap="round" />
<polyline points="1073.4,718.2 1084.0,747.1" fill="none" stroke="#f2f2f2" stroke-width="1.5" stroke-linejoin="round" stroke-linecap="round" />
<polyline points="1064.4,787.7 1075.1,817.2" fill="none" stroke="#f2f2f2" stroke-width="1.5" stroke-linejoin="round" stroke-linecap="round" />
<polyline points="1094.0,778.7 1104.8,808.1" fill="none" stroke="#f2f2f2" stroke-width="1.5" stroke-linejoin="round" stroke-linecap="round" />
<polyline points="1084.7,846.1 1095.5,876.1" fill="none" stroke="#f2f2f2" stroke-width="1.5" stroke-linejoin="round" stroke-linecap="round" />
<polyline points="1114.4,836.9 1125.3,866.7" fill="none" stroke="#f2f2f2" stroke-width="1.5" stroke-linejoin="round" stroke-linecap="round" />
<polyline points="804.1,550.9 812.0,573.9" fill="none" stroke="#f2f2f2" stroke-width="1.5" stroke-linejoin="round" stroke-linecap="round" />
<polyline points="838.6,541.6 846.5,564.5" fill="none" stroke="#f2f2f2" stroke-width="1.5" stroke-linejoin="round" stroke-linecap="round" />
<polyline points="921.4,610.4 929.5,633.6" fill="none" stroke="#f2f2f2" stroke-width="1.5" stroke-linejoin="round" stroke-linecap="round" />
<polyline points="955.4,600.9 963.6,624.0" fill="none" stroke="#f2f2f2" stroke-width="1.5" stroke-linejoin="round" stroke-linecap="round" />
<polyline points="999.8,660.1 1026.3,652.5" fill="none" stroke="#f2f2f2" stroke-width="1.5" stroke-linejoin="round" stroke-linecap="round" />
<polyline points="1010.5,689.8 1037.1,682.1" fill="none" stroke="#f2f2f2" stroke-width="1.5" stroke-linejoin="round" stroke-linecap="round" />
<polyline points="1093.9,528.3 1119.5,521.3" fill="none" stroke="#f2f2f2" stroke-width="1.5" stroke-linejoin="round" stroke-linecap="round" />
<polyline points="1104.7,556.8 1130.3,549.7" fill="none" stroke="#f2f2f2" stroke-width="1.5" stroke-linejoin="round" stroke-linecap="round" />
<polyline points="1107.2,563.1 1132.9,555.9" fill="none" stroke="#f2f2f2" stroke-width="1.5" stroke-linejoin="round" stroke-linecap="round" />
<polyline points="1118.1,591.8 1143.8,584.5" fill="none" stroke="#f2f2f2" stroke-width="1.5" stroke-linejoin="round" stroke-linecap="round" />
<polyline points="1189.9,528.1 1198.5,550.3" fill="none" stroke="#f2f2f2" stroke-width="1.5" stroke-linejoin="round" stroke-linecap="round" />
<polyline points="1221.8,519.2 1230.5,541.3" fill="none" stroke="#f2f2f2" stroke-width="1.5" stroke-linejoin="round" stroke-linecap="round" />
<polyline points="1248.9,563.6 1259.8,591.0" fill="none" stroke="#f2f2f2" stroke-width="1.5" stroke-linejoin="round" stroke-linecap="round" />
<polyline points="1276.6,555.7 1287.5,583.0" fill="none" stroke="#f2f2f2" stroke-width="1.5" stroke-linejoin="round" stroke-linecap="round" />
<polyline points="1284.4,554.0 1295.3,581.3" fill="none" stroke="#f2f2f2" stroke-width="1.5" stroke-linejoin="round" stroke-linecap="round" />
<polyline points="1311.8,546.2 1322.8,573.4" fill="none" stroke="#f2f2f2" stroke-width="1.5" stroke-linejoin="round" stroke-linecap="round" />
<polyline points="1231.0,624.0 1240.2,621.3" fill="none" stroke="#f2f2f2" stroke-width="1.5" stroke-linejoin="round" stroke-linecap="round" />
<polyline points="1300.6,622.9 1309.6,620.2" fill="none" stroke="#f2f2f2" stroke-width="1.5" stroke-linejoin="round" stroke-linecap="round" />
<polyline points="1111.9,617.9 1143.5,608.8" fill="none" stroke="#f2f2f2" stroke-width="1.5" stroke-linejoin="round" stroke-linecap="round" />
<polyline points="1121.4,643.3 1153.1,634.1" fill="none" stroke="#f2f2f2" stroke-width="1.5" stroke-linejoin="round" stroke-linecap="round" />
<polyline points="1133.6,677.9 1165.4,668.5" fill="none" stroke="#f2f2f2" stroke-width="1.5" stroke-linejoin="round" stroke-linecap="round" />
<polyline points="1143.3,703.6 1175.2,694.1" fill="none" stroke="#f2f2f2" stroke-width="1.5" stroke-linejoin="round" stroke-linecap="round" />
<polyline points="1357.7,497.1 1366.7,518.8" fill="none" stroke="#f2f2f2" stroke-width="1.5" stroke-linejoin="round" stroke-linecap="round" />
<polyline points="1388.5,488.5 1397.5,510.1" fill="none" stroke="#f2f2f2" stroke-width="1.5" stroke-linejoin="round" stroke-linecap="round" />
<polyline points="1441.7,544.9 1465.6,538.0" fill="none" stroke="#f2f2f2" stroke-width="1.5" stroke-linejoin="round" stroke-linecap="round" />
<polyline points="1453.3,572.8 1477.3,565.7" fill="none" stroke="#f2f2f2" stroke-width="1.5" stroke-linejoin="round" stroke-linecap="round" />
<polyline points="1481.7,602.3 1511.1,593.6" fill="none" stroke="#f2f2f2" stroke-width="1.5" stroke-linejoin="round" stroke-linecap="round" />
<polyline points="1492.0,626.9 1521.5,618.1" fill="none" stroke="#f2f2f2" stroke-width="1.5" stroke-linejoin="round" stroke-linecap="round" />
<polyline points="1480.1,640.6 1483.5,648.7" fill="none" stroke="#f2f2f2" stroke-width="1.5" stroke-linejoin="round" stroke-linecap="round" />
<polyline points="1503.9,653.8 1533.4,644.8" fill="none" stroke="#f2f2f2" stroke-width="1.5" stroke-linejoin="round" stroke-linecap="round" />
<polyline points="1514.4,678.7 1543.9,669.6" fill="none" stroke="#f2f2f2" stroke-width="1.5" stroke-linejoin="round" stroke-linecap="round" />
<polyline points="1529.1,717.5 1558.8,708.2" fill="none" stroke="#f2f2f2" stroke-width="1.5" stroke-linejoin="round" stroke-linecap="round" />
<polyline points="1539.8,742.7 1569.5,733.3" fill="none" stroke="#f2f2f2" stroke-width="1.5" stroke-linejoin="round" stroke-linecap="round" />
<polyline points="1477.3,790.2 1502.0,782.2" fill="none" stroke="#f2f2f2" stroke-width="1.5" stroke-linejoin="round" stroke-linecap="round" />
<polyline points="1489.5,819.9 1514.3,811.9" fill="none" stroke="#f2f2f2" stroke-width="1.5" stroke-linejoin="round" stroke-linecap="round" />
<polyline points="1169.4,773.0 1201.4,763.2" fill="none" stroke="#f2f2f2" stroke-width="1.5" stroke-linejoin="round" stroke-linecap="round" />
<polyline points="1179.3,799.4 1211.4,789.4" fill="none" stroke="#f2f2f2" stroke-width="1.5" stroke-linejoin="round" stroke-linecap="round" />
<polyline points="1193.9,831.4 1226.0,821.2" fill="none" stroke="#f2f2f2" stroke-width="1.5" stroke-linejoin="round" stroke-linecap="round" />
<polyline points="1203.9,858.1 1236.1,847.8" fill="none" stroke="#f2f2f2" stroke-width="1.5" stroke-linejoin="round" stroke-linecap="round" />
<polyline points="1329.0,867.7 1338.4,864.7" fill="none" stroke="#f2f2f2" stroke-width="1.5" stroke-linejoin="round" stroke-linecap="round" />
<polyline points="1246.1,433.5 1254.7,455.0" fill="none" stroke="#f2f2f2" stroke-width="1.5" stroke-linejoin="round" stroke-linecap="round" />
<polyline points="1277.2,425.1 1285.9,446.5" fill="none" stroke="#f2f2f2" stroke-width="1.5" stroke-linejoin="round" stroke-linecap="round" />
<text x="0" y="0" font-family="Liberation Sans" font-size="17" fill="#f6f6f6" textLength="38.8" lengthAdjust="spacingAndGlyphs" transform="matrix(-0.2450,-0.9695,0.9658,-0.2592,545.5,613.6)">R17</text>
<text x="0" y="0" font-family="Liberation Sans" font-size="17" fill="#f6f6f6" textLength="42.1" lengthAdjust="spacingAndGlyphs" transform="matrix(-0.2565,-0.9665,0.9641,-0.2655,380.3,723.0)">R16</text>
<text x="0" y="0" font-family="Liberation Sans" font-size="17" fill="#f6f6f6" textLength="41.7" lengthAdjust="spacingAndGlyphs" transform="matrix(-0.2063,-0.9785,0.9635,-0.2679,517.6,710.2)">R21</text>
<text x="0" y="0" font-family="Liberation Sans" font-size="17" fill="#f6f6f6" textLength="46.2" lengthAdjust="spacingAndGlyphs" transform="matrix(0.9529,-0.3032,0.2688,0.9632,355.6,756.4)">R27</text>
<text x="0" y="0" font-family="Liberation Sans" font-size="17" fill="#f6f6f6" textLength="48.2" lengthAdjust="spacingAndGlyphs" transform="matrix(0.9576,-0.2881,0.2773,0.9608,440.3,772.4)">C12</text>
<text x="0" y="0" font-family="Liberation Sans" font-size="17" fill="#f6f6f6" textLength="42.2" lengthAdjust="spacingAndGlyphs" transform="matrix(-0.2537,-0.9673,0.9621,-0.2726,362.0,802.5)">R15</text>
<text x="0" y="0" font-family="Liberation Sans" font-size="17" fill="#f6f6f6" textLength="20.6" lengthAdjust="spacingAndGlyphs" transform="matrix(0.9216,-0.3881,0.2821,0.9594,442.0,622.0)">x1</text>
<text x="0" y="0" font-family="Liberation Sans" font-size="17" fill="#f6f6f6" textLength="38.5" lengthAdjust="spacingAndGlyphs" transform="matrix(-0.3147,-0.9492,0.9573,-0.2891,405.6,964.8)">J27</text>
<text x="0" y="0" font-family="Liberation Sans" font-size="17" fill="#f6f6f6" textLength="42.5" lengthAdjust="spacingAndGlyphs" transform="matrix(-0.2281,-0.9736,0.9573,-0.2892,464.0,947.8)">J21</text>
<text x="0" y="0" font-family="Liberation Sans" font-size="17" fill="#f6f6f6" textLength="35.0" lengthAdjust="spacingAndGlyphs" transform="matrix(-0.2425,-0.9701,0.9574,-0.2887,518.7,925.9)">J25</text>
<text x="0" y="0" font-family="Liberation Sans" font-size="17" fill="#f6f6f6" textLength="37.2" lengthAdjust="spacingAndGlyphs" transform="matrix(-0.1961,-0.9806,0.9573,-0.2891,580.7,911.3)">J26</text>
<text x="0" y="0" font-family="Liberation Sans" font-size="17" fill="#f6f6f6" textLength="117.0" lengthAdjust="spacingAndGlyphs" transform="matrix(0.9657,-0.2598,0.3067,0.9518,684.0,654.3)">RV_zero_1</text>
<text x="0" y="0" font-family="Liberation Sans" font-size="17" fill="#f6f6f6" textLength="35.4" lengthAdjust="spacingAndGlyphs" transform="matrix(-0.2710,-0.9626,0.9627,-0.2707,715.6,683.5)">R5</text>
<text x="0" y="0" font-family="Liberation Sans" font-size="17" fill="#f6f6f6" textLength="23.1" lengthAdjust="spacingAndGlyphs" transform="matrix(0.9529,-0.3032,0.3023,0.9532,654.0,690.0)">R7</text>
<text x="0" y="0" font-family="Liberation Sans" font-size="17" fill="#f6f6f6" textLength="25.4" lengthAdjust="spacingAndGlyphs" transform="matrix(0.9290,-0.3700,0.3120,0.9501,759.4,728.4)">C7</text>
<text x="0" y="0" font-family="Liberation Sans" font-size="17" fill="#f6f6f6" textLength="23.9" lengthAdjust="spacingAndGlyphs" transform="matrix(-0.4100,-0.9121,0.9611,-0.2763,803.2,715.0)">J5</text>
<text x="0" y="0" font-family="Liberation Sans" font-size="17" fill="#f6f6f6" textLength="24.2" lengthAdjust="spacingAndGlyphs" transform="matrix(-0.3507,-0.9365,0.9604,-0.2785,857.9,721.2)">C6</text>
<text x="0" y="0" font-family="Liberation Sans" font-size="17" fill="#f6f6f6" textLength="38.5" lengthAdjust="spacingAndGlyphs" transform="matrix(-0.3170,-0.9484,0.9603,-0.2791,640.2,790.5)">J13</text>
<text x="0" y="0" font-family="Liberation Sans" font-size="17" fill="#f6f6f6" textLength="40.9" lengthAdjust="spacingAndGlyphs" transform="matrix(-0.2986,-0.9544,0.9584,-0.2855,658.5,851.3)">J12</text>
<text x="0" y="0" font-family="Liberation Sans" font-size="17" fill="#f6f6f6" textLength="25.9" lengthAdjust="spacingAndGlyphs" transform="matrix(-0.2507,-0.9681,0.9649,-0.2625,857.9,562.3)">R6</text>
<text x="0" y="0" font-family="Liberation Sans" font-size="17" fill="#f6f6f6" textLength="126.7" lengthAdjust="spacingAndGlyphs" transform="matrix(0.9684,-0.2494,0.3296,0.9441,888.6,600.4)">RV_angle_1</text>
<text x="0" y="0" font-family="Liberation Sans" font-size="17" fill="#f6f6f6" textLength="26.8" lengthAdjust="spacingAndGlyphs" transform="matrix(-0.2425,-0.9701,0.9623,-0.2721,926.7,637.6)">R9</text>
<text x="0" y="0" font-family="Liberation Sans" font-size="17" fill="#f6f6f6" textLength="43.0" lengthAdjust="spacingAndGlyphs" transform="matrix(0.9517,-0.3071,0.3378,0.9412,1007.6,709.2)">R10</text>
<text x="0" y="0" font-family="Liberation Sans" font-size="17" fill="#f6f6f6" textLength="56.9" lengthAdjust="spacingAndGlyphs" transform="matrix(-0.2722,-0.9622,0.9554,-0.2953,752.5,923.2)">U_X1</text>
<text x="0" y="0" font-family="Liberation Sans" font-size="17" fill="#f6f6f6" textLength="24.3" lengthAdjust="spacingAndGlyphs" transform="matrix(-0.3088,-0.9511,0.9552,-0.2960,696.5,947.5)">J8</text>
<text x="0" y="0" font-family="Liberation Sans" font-size="17" fill="#f6f6f6" textLength="25.2" lengthAdjust="spacingAndGlyphs" transform="matrix(-0.3257,-0.9455,0.9531,-0.3027,717.2,1010.8)">J3</text>
<text x="0" y="0" font-family="Liberation Sans" font-size="17" fill="#f6f6f6" textLength="30.5" lengthAdjust="spacingAndGlyphs" transform="matrix(0.9566,-0.2916,0.3115,0.9502,840.0,987.6)">C1</text>
<text x="0" y="0" font-family="Liberation Sans" font-size="17" fill="#f6f6f6" textLength="28.0" lengthAdjust="spacingAndGlyphs" transform="matrix(0.9562,-0.2926,0.3322,0.9432,1028.6,926.8)">R1</text>
<text x="0" y="0" font-family="Liberation Sans" font-size="17" fill="#f6f6f6" textLength="23.0" lengthAdjust="spacingAndGlyphs" transform="matrix(-0.3005,-0.9538,0.9577,-0.2877,1046.9,756.5)">J1</text>
<text x="0" y="0" font-family="Liberation Sans" font-size="17" fill="#f6f6f6" textLength="30.1" lengthAdjust="spacingAndGlyphs" transform="matrix(-0.2992,-0.9542,0.9567,-0.2912,1065.0,785.7)">C2</text>
<text x="0" y="0" font-family="Liberation Sans" font-size="17" fill="#f6f6f6" textLength="24.4" lengthAdjust="spacingAndGlyphs" transform="matrix(-0.3358,-0.9419,0.9557,-0.2944,1071.2,816.0)">J2</text>
<text x="0" y="0" font-family="Liberation Sans" font-size="17" fill="#f6f6f6" textLength="38.1" lengthAdjust="spacingAndGlyphs" transform="matrix(-0.3123,-0.9500,0.9534,-0.3018,1093.9,882.2)">J11</text>
<text x="0" y="0" font-family="Liberation Sans" font-size="17" fill="#f6f6f6" textLength="108.2" lengthAdjust="spacingAndGlyphs" transform="matrix(0.9515,-0.3076,0.3571,0.9341,1135.1,532.6)">RV_zero_4</text>
<text x="0" y="0" font-family="Liberation Sans" font-size="17" fill="#f6f6f6" textLength="31.7" lengthAdjust="spacingAndGlyphs" transform="matrix(-0.3096,-0.9509,0.9624,-0.2718,1189.8,560.5)">R22</text>
<text x="0" y="0" font-family="Liberation Sans" font-size="17" fill="#f6f6f6" textLength="34.9" lengthAdjust="spacingAndGlyphs" transform="matrix(0.9509,-0.3093,0.3512,0.9363,1108.3,617.3)">J24</text>
<text x="0" y="0" font-family="Liberation Sans" font-size="17" fill="#f6f6f6" textLength="36.1" lengthAdjust="spacingAndGlyphs" transform="matrix(0.9533,-0.3021,0.3512,0.9363,1129.7,675.3)">J23</text>
<text x="0" y="0" font-family="Liberation Sans" font-size="17" fill="#f6f6f6" textLength="45.1" lengthAdjust="spacingAndGlyphs" transform="matrix(0.9507,-0.3102,0.3613,0.9325,1202.7,598.0)">C13</text>
<text x="0" y="0" font-family="Liberation Sans" font-size="17" fill="#f6f6f6" textLength="39.5" lengthAdjust="spacingAndGlyphs" transform="matrix(0.9527,-0.3040,0.3681,0.9298,1272.4,598.0)">C11</text>
<text x="0" y="0" font-family="Liberation Sans" font-size="17" fill="#f6f6f6" textLength="36.7" lengthAdjust="spacingAndGlyphs" transform="matrix(-0.2617,-0.9651,0.9620,-0.2729,1357.2,524.0)">R24</text>
<text x="0" y="0" font-family="Liberation Sans" font-size="17" fill="#f6f6f6" textLength="35.4" lengthAdjust="spacingAndGlyphs" transform="matrix(0.9506,-0.3103,0.3512,0.9363,1165.7,770.0)">J20</text>
<text x="0" y="0" font-family="Liberation Sans" font-size="17" fill="#f6f6f6" textLength="45.0" lengthAdjust="spacingAndGlyphs" transform="matrix(-0.3242,-0.9460,0.9558,-0.2942,1219.6,767.7)">U_Y1</text>
<text x="0" y="0" font-family="Liberation Sans" font-size="17" fill="#f6f6f6" textLength="34.3" lengthAdjust="spacingAndGlyphs" transform="matrix(0.9510,-0.3092,0.3515,0.9362,1190.4,827.2)">J19</text>
<text x="0" y="0" font-family="Liberation Sans" font-size="17" fill="#f6f6f6" textLength="38.9" lengthAdjust="spacingAndGlyphs" transform="matrix(0.9512,-0.3085,0.3618,0.9322,1301.5,838.5)">C10</text>
<text x="0" y="0" font-family="Liberation Sans" font-size="17" fill="#f6f6f6" textLength="38.9" lengthAdjust="spacingAndGlyphs" transform="matrix(0.9530,-0.3031,0.3859,0.9225,1452.9,590.2)">R25</text>
<text x="0" y="0" font-family="Liberation Sans" font-size="17" fill="#f6f6f6" textLength="30.2" lengthAdjust="spacingAndGlyphs" transform="matrix(0.9480,-0.3182,0.3879,0.9217,1477.3,598.7)">J17</text>
<text x="0" y="0" font-family="Liberation Sans" font-size="17" fill="#f6f6f6" textLength="37.4" lengthAdjust="spacingAndGlyphs" transform="matrix(0.9566,-0.2913,0.3873,0.9220,1494.4,654.5)">J18</text>
<text x="0" y="0" font-family="Liberation Sans" font-size="17" fill="#f6f6f6" textLength="31.6" lengthAdjust="spacingAndGlyphs" transform="matrix(0.9487,-0.3162,0.3880,0.9217,1525.9,711.7)">J22</text>
<text x="0" y="0" font-family="Liberation Sans" font-size="17" fill="#f6f6f6" textLength="40.5" lengthAdjust="spacingAndGlyphs" transform="matrix(0.9551,-0.2962,0.3795,0.9252,1467.2,786.0)">R18</text>
<text x="0" y="0" font-family="Liberation Sans" font-size="17" fill="#f6f6f6" textLength="116.5" lengthAdjust="spacingAndGlyphs" transform="matrix(0.9600,-0.2799,0.3785,0.9256,1327.0,470.0)">RV_angle_3</text>
<text x="0" y="0" font-family="Liberation Sans" font-size="17" fill="#f6f6f6" textLength="32.0" lengthAdjust="spacingAndGlyphs" transform="matrix(-0.2440,-0.9698,0.9647,-0.2632,1290.8,451.0)">R2-</text>
<polyline points="729.5,825.8 731.7,832.6 736.2,831.2" fill="none" stroke="#f2f2f2" stroke-width="1.5" stroke-linejoin="round" stroke-linecap="round" />
<polyline points="731.7,832.6 770.2,952.6" fill="none" stroke="#f2f2f2" stroke-width="1.5" stroke-linejoin="round" stroke-linecap="round" />
<polyline points="974.8,760.1 1015.6,875.8" fill="none" stroke="#f2f2f2" stroke-width="1.5" stroke-linejoin="round" stroke-linecap="round" />
<polyline points="1011.2,877.1 1015.6,875.8 1017.9,882.5" fill="none" stroke="#f2f2f2" stroke-width="1.5" stroke-linejoin="round" stroke-linecap="round" />
<polyline points="770.2,952.6 774.8,951.1 780.8,969.7" fill="none" stroke="#f2f2f2" stroke-width="1.5" stroke-linejoin="round" stroke-linecap="round" />
<polyline points="1194.0,683.8 1196.5,690.1 1200.5,688.9" fill="none" stroke="#f2f2f2" stroke-width="1.5" stroke-linejoin="round" stroke-linecap="round" />
<polyline points="1196.5,690.1 1239.9,803.7" fill="none" stroke="#f2f2f2" stroke-width="1.5" stroke-linejoin="round" stroke-linecap="round" />
<polyline points="1416.7,624.5 1462.0,734.2" fill="none" stroke="#f2f2f2" stroke-width="1.5" stroke-linejoin="round" stroke-linecap="round" />
<polyline points="1458.0,735.5 1462.0,734.2 1464.5,740.5" fill="none" stroke="#f2f2f2" stroke-width="1.5" stroke-linejoin="round" stroke-linecap="round" />
<polyline points="1239.9,803.7 1244.0,802.4 1250.6,819.7" fill="none" stroke="#f2f2f2" stroke-width="1.5" stroke-linejoin="round" stroke-linecap="round" />
<polyline points="633.2,565.4 656.6,638.6 807.5,597.1 804.1,587.1" fill="none" stroke="#f2f2f2" stroke-width="1.8" stroke-linejoin="round" stroke-linecap="round" />
<polyline points="849.2,508.0 873.9,578.9 1017.7,539.5 1014.2,529.8" fill="none" stroke="#f2f2f2" stroke-width="1.8" stroke-linejoin="round" stroke-linecap="round" />
<polyline points="1090.6,443.9 1116.7,512.3 1252.8,475.0 1249.1,465.6" fill="none" stroke="#f2f2f2" stroke-width="1.8" stroke-linejoin="round" stroke-linecap="round" />
<polyline points="1285.9,392.0 1313.0,458.4 1443.0,422.7 1439.2,413.6" fill="none" stroke="#f2f2f2" stroke-width="1.8" stroke-linejoin="round" stroke-linecap="round" />
<polygon points="389.1,608.5 370.3,613.5 377.3,638.1 396.2,633.0" fill="#a9a9a9" />
<polygon points="426.5,598.7 445.1,593.8 452.3,618.1 433.7,623.0" fill="#a9a9a9" />
<polygon points="380.0,608.3 433.7,594.1 434.7,597.4 441.4,620.2 387.9,634.4 386.6,631.3" fill="#0e0e0e" />
<polygon points="380.0,608.3 433.7,594.1 440.4,617.0 386.6,631.3" fill="#e6e2d2" />
<polygon points="385.7,606.8 428.1,595.6 434.8,618.5 392.3,629.8" fill="#1c1c1c" />
<polygon points="491.7,590.8 487.2,575.8 516.5,568.1 521.1,583.1" fill="#a9a9a9" />
<polygon points="500.9,621.1 505.4,636.3 534.9,628.3 530.3,613.2" fill="#a9a9a9" />
<polygon points="489.9,580.9 517.5,573.6 530.7,616.8 531.3,619.9 503.7,627.3 490.7,584.1" fill="#0e0e0e" />
<polygon points="489.9,580.9 503.0,624.3 530.7,616.8 517.5,573.6" fill="#e6e2d2" />
<polygon points="491.3,585.4 501.6,619.7 529.3,612.3 518.9,578.1" fill="#1c1c1c" />
<polygon points="806.5,546.8 801.5,532.3 829.1,525.0 834.0,539.4" fill="#a9a9a9" />
<polygon points="816.5,576.1 821.5,590.8 849.2,583.2 844.1,568.6" fill="#a9a9a9" />
<polygon points="805.2,540.4 805.6,537.1 831.5,530.1 846.0,571.9 845.4,575.1 819.5,582.1" fill="#0e0e0e" />
<polygon points="805.6,537.1 820.0,579.0 846.0,571.9 831.5,530.1" fill="#e6e2d2" />
<polygon points="807.1,541.4 818.5,574.6 844.4,567.5 833.1,534.5" fill="#1c1c1c" />
<polygon points="1248.0,429.7 1242.6,416.1 1267.4,409.4 1272.9,423.0" fill="#a9a9a9" />
<polygon points="1259.0,457.1 1264.6,470.9 1289.5,464.0 1284.0,450.3" fill="#a9a9a9" />
<polygon points="1246.5,423.6 1248.5,420.1 1271.9,413.8 1287.7,452.9 1285.6,456.4 1262.2,462.8" fill="#0e0e0e" />
<polygon points="1248.5,420.1 1264.2,459.3 1287.7,452.9 1271.9,413.8" fill="#e6e2d2" />
<polygon points="1250.1,424.2 1262.6,455.2 1286.0,448.8 1273.5,417.9" fill="#1c1c1c" />
<polygon points="400.0,642.9 402.9,652.8 381.3,658.6 378.4,648.6" fill="#b8b8b8" />
<polygon points="396.8,642.5 399.0,650.2 388.2,653.1 386.0,645.4" fill="#e8e4d8" />
<polygon points="453.5,628.5 456.4,638.4 477.7,632.7 474.8,622.9" fill="#b8b8b8" />
<polygon points="455.8,626.7 458.1,634.4 468.8,631.5 466.5,623.9" fill="#e8e4d8" />
<polygon points="405.1,660.5 408.0,670.4 386.3,676.3 383.5,666.3" fill="#b8b8b8" />
<polygon points="401.9,660.2 404.1,667.9 393.3,670.9 391.0,663.1" fill="#e8e4d8" />
<polygon points="458.7,646.0 461.6,655.9 482.9,650.1 480.0,640.3" fill="#b8b8b8" />
<polygon points="461.0,644.3 463.3,651.9 474.0,649.1 471.7,641.4" fill="#e8e4d8" />
<polygon points="410.2,678.2 413.1,688.2 391.4,694.1 388.5,684.0" fill="#b8b8b8" />
<polygon points="407.0,677.9 409.2,685.7 398.4,688.7 396.1,680.9" fill="#e8e4d8" />
<polygon points="463.9,663.6 466.8,673.5 488.1,667.7 485.2,657.8" fill="#b8b8b8" />
<polygon points="466.2,661.9 468.5,669.6 479.2,666.7 476.9,659.0" fill="#e8e4d8" />
<polygon points="415.3,695.9 418.2,706.0 396.5,711.9 393.6,701.9" fill="#b8b8b8" />
<polygon points="412.1,695.8 414.4,703.6 403.5,706.6 401.2,698.7" fill="#e8e4d8" />
<polygon points="469.1,681.2 472.0,691.2 493.4,685.3 490.4,675.4" fill="#b8b8b8" />
<polygon points="471.5,679.5 473.7,687.3 484.5,684.4 482.2,676.6" fill="#e8e4d8" />
<polygon points="392.4,634.2 454.5,617.6 456.7,624.8 476.9,692.9 415.0,709.9 412.3,703.4" fill="#0d0d0d" />
<polygon points="392.4,634.2 412.3,703.4 474.8,686.3 454.5,617.6" fill="#3c3a3a" />
<circle cx="407.5" cy="640.9" r="3.5" fill="#c8c4b8"/>
<polygon points="321.8,699.8 317.5,684.1 348.2,675.8 352.6,691.4" fill="#a9a9a9" />
<polygon points="330.6,731.3 335.0,747.1 365.8,738.6 361.4,722.8" fill="#a9a9a9" />
<polygon points="319.4,689.9 348.3,682.1 349.7,685.0 362.3,729.9 333.4,737.8 331.9,735.1" fill="#0e0e0e" />
<polygon points="319.4,689.9 331.9,735.1 360.9,727.1 348.3,682.1" fill="#e6e2d2" />
<polygon points="320.7,694.6 330.6,730.3 359.6,722.4 349.6,686.8" fill="#1c1c1c" />
<polygon points="630.7,505.5 788.5,464.6 812.9,535.9 805.1,596.1 657.4,636.6 635.5,568.2" fill="#061430" />
<polygon points="630.7,505.5 635.5,568.2 657.4,636.6 654.1,578.4" fill="#050f28" />
<polygon points="630.7,505.5 788.5,464.6 812.9,535.9 654.1,578.4" fill="#5099e6" />
<polygon points="674.5,567.4 803.2,533.0 804.9,538.1 676.2,572.5" fill="#061430" />
<polygon points="664.6,631.2 676.2,628.1 676.0,622.8 664.4,626.0" fill="#4a90e2" />
<polygon points="786.3,597.9 797.6,594.8 798.2,589.4 786.9,592.5" fill="#4a90e2" />
<polyline points="807.5,597.1 804.1,587.1" fill="none" stroke="#f2f2f2" stroke-width="1.8" stroke-linejoin="round" stroke-linecap="round" />
<ellipse cx="658.9" cy="518.8" rx="18.5" ry="17.5" fill="#2a1408"/>
<ellipse cx="658.9" cy="514.8" rx="18.5" ry="17.0" fill="#f09a48"/>
<path d="M643.4,520.8 Q648.4,531.8 660.9,530.8 L657.9,525.8 Q649.4,525.8 646.4,518.8 Z" fill="#2a1408"/>
<line x1="640.4" y1="515.8" x2="676.4" y2="506.8" stroke="#2a1408" stroke-width="5"/>
<path d="M672.4,511.8 L679.4,509.8 L679.4,519.8 Z" fill="#5099e6"/>
<polygon points="851.5,510.8 862.5,445.4 1012.4,406.6 1038.2,475.6 1015.4,538.4 874.5,577.0" fill="#061430" />
<polygon points="862.5,445.4 851.5,510.8 874.6,577.0 887.4,516.0" fill="#050f28" />
<polygon points="862.5,445.4 1012.4,406.6 1038.2,475.6 887.4,516.0" fill="#5099e6" />
<polygon points="906.5,505.4 1028.7,472.8 1030.6,477.7 908.3,510.4" fill="#061430" />
<polygon points="882.0,571.7 893.0,568.7 894.3,563.2 883.2,566.2" fill="#4a90e2" />
<polygon points="998.0,539.9 1008.7,537.0 1010.7,531.4 999.9,534.3" fill="#4a90e2" />
<polyline points="1017.7,539.5 1014.2,529.8" fill="none" stroke="#f2f2f2" stroke-width="1.8" stroke-linejoin="round" stroke-linecap="round" />
<ellipse cx="889.9" cy="458.5" rx="18.5" ry="17.5" fill="#2a1408"/>
<ellipse cx="889.9" cy="454.5" rx="18.5" ry="17.0" fill="#f09a48"/>
<path d="M874.4,460.5 Q879.4,471.5 891.9,470.5 L888.9,465.5 Q880.4,465.5 877.4,458.5 Z" fill="#2a1408"/>
<line x1="871.4" y1="455.5" x2="907.4" y2="446.5" stroke="#2a1408" stroke-width="5"/>
<path d="M903.4,451.5 L910.4,449.5 L910.4,459.5 Z" fill="#5099e6"/>
<polygon points="1092.9,446.5 1120.7,378.6 1262.0,341.9 1289.1,408.4 1250.5,473.9 1117.2,510.5" fill="#061430" />
<polygon points="1120.7,378.6 1092.9,446.5 1117.2,510.5 1147.0,446.5" fill="#050f28" />
<polygon points="1120.7,378.6 1262.1,341.9 1289.1,408.5 1147.0,446.5" fill="#5099e6" />
<polygon points="1164.9,436.4 1280.0,405.7 1282.0,410.4 1166.7,441.2" fill="#061430" />
<polygon points="1124.9,505.2 1135.3,502.3 1138.1,496.6 1127.6,499.4" fill="#4a90e2" />
<polygon points="1234.7,475.1 1244.8,472.4 1248.2,466.5 1238.0,469.3" fill="#4a90e2" />
<polyline points="1252.8,475.0 1249.1,465.6" fill="none" stroke="#f2f2f2" stroke-width="1.8" stroke-linejoin="round" stroke-linecap="round" />
<ellipse cx="1147.1" cy="391.5" rx="18.5" ry="17.5" fill="#2a1408"/>
<ellipse cx="1147.1" cy="387.5" rx="18.5" ry="17.0" fill="#f09a48"/>
<path d="M1131.6,393.5 Q1136.6,404.5 1149.1,403.5 L1146.1,398.5 Q1137.6,398.5 1134.6,391.5 Z" fill="#2a1408"/>
<line x1="1128.6" y1="388.5" x2="1164.6" y2="379.5" stroke="#2a1408" stroke-width="5"/>
<path d="M1160.6,384.5 L1167.6,382.5 L1167.6,392.5 Z" fill="#5099e6"/>
<polygon points="1288.2,394.6 1328.8,324.7 1463.5,289.8 1491.5,354.3 1440.8,421.8 1313.5,456.7" fill="#061430" />
<polygon points="1328.8,324.7 1288.2,394.6 1313.5,456.7 1356.2,390.5" fill="#050f28" />
<polygon points="1328.8,324.7 1463.5,289.8 1491.5,354.3 1356.2,390.5" fill="#5099e6" />
<polygon points="1373.0,380.8 1482.7,351.5 1484.7,356.1 1375.0,385.5" fill="#061430" />
<polygon points="1321.3,451.4 1331.3,448.7 1335.2,442.7 1325.2,445.4" fill="#4a90e2" />
<polygon points="1426.2,422.7 1435.9,420.0 1440.4,414.0 1430.6,416.6" fill="#4a90e2" />
<polyline points="1443.0,422.7 1439.2,413.6" fill="none" stroke="#f2f2f2" stroke-width="1.8" stroke-linejoin="round" stroke-linecap="round" />
<ellipse cx="1354.4" cy="337.4" rx="18.5" ry="17.5" fill="#2a1408"/>
<ellipse cx="1354.4" cy="333.4" rx="18.5" ry="17.0" fill="#f09a48"/>
<path d="M1338.9,339.4 Q1343.9,350.4 1356.4,349.4 L1353.4,344.4 Q1344.9,344.4 1341.9,337.4 Z" fill="#2a1408"/>
<line x1="1335.9" y1="334.4" x2="1371.9" y2="325.4" stroke="#2a1408" stroke-width="5"/>
<path d="M1367.9,330.4 L1374.9,328.4 L1374.9,338.4 Z" fill="#5099e6"/>
<polygon points="516.3,671.0 511.7,655.6 541.2,647.6 545.9,662.9" fill="#a9a9a9" />
<polygon points="525.6,701.8 530.3,717.4 560.0,709.1 555.3,693.6" fill="#a9a9a9" />
<polygon points="514.5,661.2 542.4,653.6 555.8,697.7 556.4,700.5 528.6,708.2 515.3,664.1" fill="#0e0e0e" />
<polygon points="514.5,661.2 527.9,705.4 555.8,697.7 542.4,653.6" fill="#e6e2d2" />
<polygon points="515.9,665.8 526.5,700.8 554.4,693.0 543.8,658.2" fill="#1c1c1c" />
<polygon points="633.9,656.8 615.7,661.8 623.4,686.3 641.6,681.2" fill="#a9a9a9" />
<polygon points="669.9,646.9 687.9,642.0 695.7,666.1 677.7,671.1" fill="#a9a9a9" />
<polygon points="626.0,656.8 677.8,642.5 685.1,665.3 685.2,668.2 633.5,682.6 626.3,659.8" fill="#0e0e0e" />
<polygon points="626.0,656.8 677.8,642.6 685.1,665.3 633.3,679.8" fill="#e6e2d2" />
<polygon points="631.5,655.3 672.4,644.0 679.7,666.8 638.8,678.2" fill="#1c1c1c" />
<polygon points="1091.5,532.1 1075.1,536.7 1083.7,559.5 1100.1,554.9" fill="#a9a9a9" />
<polygon points="1124.0,523.2 1140.2,518.7 1148.9,541.3 1132.7,545.9" fill="#a9a9a9" />
<polygon points="1084.8,534.8 1086.2,531.5 1132.8,518.7 1141.0,540.0 1139.4,543.2 1092.8,556.2" fill="#0e0e0e" />
<polygon points="1086.2,531.5 1132.8,518.7 1141.0,540.0 1094.3,553.0" fill="#e6e2d2" />
<polygon points="1091.1,530.2 1128.0,520.0 1136.1,541.3 1099.2,551.6" fill="#1c1c1c" />
<polygon points="437.9,727.7 425.1,731.3 431.6,753.8 444.5,750.2" fill="#a9a9a9" />
<polygon points="466.3,719.9 479.0,716.3 485.6,738.7 472.8,742.3" fill="#a9a9a9" />
<polygon points="431.3,728.6 471.9,717.3 473.0,720.4 478.2,738.3 437.7,749.7 436.5,746.6" fill="#0e0e0e" />
<polygon points="431.3,728.6 471.9,717.3 477.2,735.2 436.5,746.6" fill="#e6e2d2" />
<polygon points="436.7,727.1 466.5,718.8 471.8,736.8 441.9,745.1" fill="#9b7b6e" />
<polygon points="715.6,651.8 710.7,636.7 739.1,628.9 744.0,643.9" fill="#a9a9a9" />
<polygon points="725.5,682.0 730.5,697.3 759.0,689.2 754.0,674.0" fill="#a9a9a9" />
<polygon points="714.4,645.1 714.5,642.1 741.2,634.7 755.5,677.9 755.2,680.8 728.5,688.3" fill="#0e0e0e" />
<polygon points="714.5,642.1 728.6,685.5 755.5,677.9 741.2,634.7" fill="#e6e2d2" />
<polygon points="715.9,646.6 727.1,680.9 754.0,673.4 742.7,639.2" fill="#1c1c1c" />
<polygon points="1191.9,524.2 1186.4,510.1 1211.9,503.1 1217.4,517.1" fill="#a9a9a9" />
<polygon points="1202.9,552.4 1208.4,566.6 1234.1,559.4 1228.5,545.2" fill="#a9a9a9" />
<polygon points="1190.4,517.9 1192.2,514.6 1216.2,508.0 1232.0,548.3 1230.1,551.5 1206.1,558.3" fill="#0e0e0e" />
<polygon points="1192.2,514.6 1208.0,555.1 1232.0,548.3 1216.2,508.0" fill="#e6e2d2" />
<polygon points="1193.8,518.9 1206.3,550.9 1230.4,544.1 1217.8,512.2" fill="#1c1c1c" />
<polygon points="299.0,779.0 294.6,763.0 325.8,754.4 330.2,770.3" fill="#a9a9a9" />
<polygon points="307.7,811.2 312.2,827.4 343.5,818.5 339.0,802.4" fill="#a9a9a9" />
<polygon points="296.5,769.3 325.8,761.1 327.3,763.7 339.9,809.6 310.6,817.9 309.0,815.5" fill="#0e0e0e" />
<polygon points="296.5,769.3 309.0,815.5 338.5,807.1 325.8,761.1" fill="#e6e2d2" />
<polygon points="297.8,774.1 307.7,810.6 337.1,802.3 327.1,765.9" fill="#1c1c1c" />
<polygon points="367.2,764.1 347.9,769.5 355.0,795.1 374.3,789.6" fill="#a9a9a9" />
<polygon points="405.6,753.3 424.6,748.0 431.9,773.3 412.8,778.7" fill="#a9a9a9" />
<polygon points="357.7,764.6 412.8,749.2 414.0,751.8 420.8,775.6 365.8,791.1 364.4,788.6" fill="#0e0e0e" />
<polygon points="357.7,764.6 412.8,749.2 419.6,773.1 364.5,788.6" fill="#e6e2d2" />
<polygon points="363.6,762.9 407.1,750.8 413.9,774.7 370.3,787.0" fill="#1c1c1c" />
<polygon points="923.7,606.3 918.5,591.7 945.7,584.1 950.9,598.7" fill="#a9a9a9" />
<polygon points="934.1,635.8 939.3,650.6 966.6,642.8 961.3,628.1" fill="#a9a9a9" />
<polygon points="922.3,599.8 923.2,596.7 948.7,589.6 963.7,631.7 962.7,634.6 937.2,641.9" fill="#0e0e0e" />
<polygon points="923.2,596.7 938.1,638.9 963.7,631.7 948.7,589.6" fill="#e6e2d2" />
<polygon points="924.7,601.1 936.5,634.5 962.2,627.2 950.3,594.0" fill="#1c1c1c" />
<polygon points="648.8,693.3 630.6,698.4 638.3,723.1 656.6,717.9" fill="#a9a9a9" />
<polygon points="684.9,683.2 702.9,678.2 710.8,702.6 692.8,707.7" fill="#a9a9a9" />
<polygon points="641.0,693.5 692.9,679.0 700.3,701.9 700.3,704.7 648.5,719.4 641.2,696.3" fill="#0e0e0e" />
<polygon points="641.0,693.5 692.9,679.0 700.3,701.9 648.3,716.6" fill="#e6e2d2" />
<polygon points="646.5,691.9 687.5,680.5 694.8,703.5 653.8,715.1" fill="#1c1c1c" />
<polygon points="1104.8,566.9 1088.4,571.5 1097.0,594.6 1113.5,589.9" fill="#a9a9a9" />
<polygon points="1137.4,557.8 1153.7,553.2 1162.4,576.1 1146.2,580.7" fill="#a9a9a9" />
<polygon points="1098.1,569.6 1099.5,566.5 1146.3,553.4 1154.6,574.9 1152.9,578.0 1106.2,591.2" fill="#0e0e0e" />
<polygon points="1099.6,566.5 1146.3,553.4 1154.6,574.9 1107.7,588.1" fill="#e6e2d2" />
<polygon points="1104.5,565.1 1141.4,554.7 1149.7,576.3 1112.6,586.7" fill="#1c1c1c" />
<polygon points="1359.6,493.3 1353.9,479.5 1378.5,472.7 1384.2,486.4" fill="#a9a9a9" />
<polygon points="1371.0,520.9 1376.7,534.8 1401.4,527.8 1395.6,513.9" fill="#a9a9a9" />
<polygon points="1357.9,487.2 1360.3,483.8 1383.4,477.4 1399.8,516.9 1397.3,520.1 1374.2,526.6" fill="#0e0e0e" />
<polygon points="1360.3,483.8 1376.7,523.4 1399.8,516.8 1383.4,477.4" fill="#e6e2d2" />
<polygon points="1362.0,488.0 1374.9,519.3 1398.1,512.7 1385.2,481.5" fill="#1c1c1c" />
<polygon points="846.0,671.9 855.5,699.9 850.8,701.3 841.2,673.2" fill="#cdb214" />
<polygon points="863.9,666.8 873.5,694.7 878.2,693.4 868.6,665.5" fill="#cdb214" />
<polygon points="845.3,673.2 846.1,669.2 866.1,663.5 875.1,689.4 874.1,693.4 854.1,699.1" fill="#060606" />
<polygon points="846.1,669.2 855.0,695.1 875.1,689.4 866.2,663.5" fill="#3d393b" />
<polyline points="858.4,672.8 861.6,657.8" fill="none" stroke="#3a2a1a" stroke-width="5.5" stroke-linejoin="round" stroke-linecap="round" stroke-linecap="butt"/>
<circle cx="861.6" cy="657.8" r="3.2" fill="#e2c48c"/>
<polygon points="807.2,684.7 816.7,712.9 811.9,714.3 802.4,686.1" fill="#cdb214" />
<polygon points="825.3,679.6 834.8,707.7 839.6,706.3 830.1,678.2" fill="#cdb214" />
<polygon points="806.6,686.1 807.2,682.1 827.4,676.3 836.2,702.4 835.4,706.3 815.3,712.1" fill="#060606" />
<polygon points="807.2,682.1 815.9,708.2 836.2,702.4 827.4,676.3" fill="#3d393b" />
<polyline points="819.5,685.7 821.9,670.9" fill="none" stroke="#3a2a1a" stroke-width="5.5" stroke-linejoin="round" stroke-linecap="round" stroke-linecap="butt"/>
<circle cx="821.9" cy="670.9" r="3.2" fill="#e2c48c"/>
<polygon points="1254.8,562.5 1265.2,588.9 1260.9,590.1 1250.5,563.7" fill="#cdb214" />
<polygon points="1271.1,557.8 1281.6,584.1 1285.9,582.9 1275.4,556.6" fill="#cdb214" />
<polygon points="1254.3,563.8 1257.2,559.3 1275.5,554.1 1285.2,578.5 1282.1,582.9 1263.9,588.1" fill="#060606" />
<polygon points="1257.2,559.3 1266.9,583.7 1285.2,578.5 1275.5,554.1" fill="#3d393b" />
<polyline points="1268.8,562.8 1279.9,546.3" fill="none" stroke="#3a2a1a" stroke-width="5.5" stroke-linejoin="round" stroke-linecap="round" stroke-linecap="butt"/>
<circle cx="1279.9" cy="546.3" r="3.2" fill="#e2c48c"/>
<polygon points="1290.2,552.9 1300.7,579.2 1296.5,580.4 1286.0,554.1" fill="#cdb214" />
<polygon points="1306.4,548.3 1317.0,574.5 1321.2,573.3 1310.7,547.1" fill="#cdb214" />
<polygon points="1289.8,554.2 1292.9,549.7 1310.9,544.5 1320.7,568.8 1317.5,573.2 1299.4,578.4" fill="#060606" />
<polygon points="1292.9,549.7 1302.6,574.0 1320.7,568.8 1310.9,544.5" fill="#3d393b" />
<polyline points="1304.3,553.2 1316.1,536.6" fill="none" stroke="#3a2a1a" stroke-width="5.5" stroke-linejoin="round" stroke-linecap="round" stroke-linecap="butt"/>
<circle cx="1316.1" cy="536.6" r="3.2" fill="#e2c48c"/>
<polygon points="1114.4,622.9 1144.9,614.2 1143.4,610.2 1112.9,619.0" fill="#cdb214" />
<polygon points="1120.0,637.9 1150.6,629.1 1152.1,633.0 1121.5,641.9" fill="#cdb214" />
<polygon points="1115.3,621.8 1117.5,617.5 1145.8,609.4 1152.1,626.0 1149.7,630.2 1121.5,638.4" fill="#060606" />
<polygon points="1117.5,617.5 1145.8,609.4 1152.1,626.0 1123.8,634.2" fill="#3d393b" />
<polyline points="1127.8,623.8 1136.2,608.3" fill="none" stroke="#3a2a1a" stroke-width="5.5" stroke-linejoin="round" stroke-linecap="round" stroke-linecap="butt"/>
<circle cx="1136.2" cy="608.3" r="3.2" fill="#e2c48c"/>
<polygon points="652.0,754.2 661.2,783.2 656.2,784.7 647.1,755.7" fill="#cdb214" />
<polygon points="670.8,748.9 680.0,777.8 684.9,776.3 675.8,747.4" fill="#cdb214" />
<polygon points="651.1,751.9 672.0,745.9 680.6,772.8 680.7,776.4 659.8,782.4 651.3,755.6" fill="#060606" />
<polygon points="651.1,751.9 659.5,778.9 680.6,772.8 672.1,745.9" fill="#3d393b" />
<polyline points="663.7,755.6 662.9,742.0" fill="none" stroke="#3a2a1a" stroke-width="5.5" stroke-linejoin="round" stroke-linecap="round" stroke-linecap="butt"/>
<circle cx="662.9" cy="742.0" r="3.2" fill="#e2c48c"/>
<polygon points="997.2,664.1 980.2,669.0 988.7,692.9 1005.7,687.9" fill="#a9a9a9" />
<polygon points="1031.0,654.4 1047.8,649.6 1056.4,673.2 1039.6,678.1" fill="#a9a9a9" />
<polygon points="990.2,667.0 991.3,664.1 1039.7,650.2 1047.9,672.4 1046.5,675.2 998.2,689.3" fill="#0e0e0e" />
<polygon points="991.3,664.1 1039.7,650.2 1047.9,672.4 999.3,686.5" fill="#e6e2d2" />
<polygon points="996.4,662.6 1034.7,651.6 1042.8,673.9 1004.5,685.0" fill="#1c1c1c" />
<polygon points="1214.5,603.0 1203.6,606.2 1211.5,626.8 1222.5,623.6" fill="#a9a9a9" />
<polygon points="1238.6,596.1 1249.5,592.9 1257.6,613.4 1246.7,616.6" fill="#a9a9a9" />
<polygon points="1210.1,606.6 1212.3,603.1 1246.9,593.2 1253.4,609.6 1251.0,613.0 1216.5,623.0" fill="#0e0e0e" />
<polygon points="1212.3,603.2 1246.9,593.2 1253.4,609.6 1218.7,619.7" fill="#e6e2d2" />
<polygon points="1216.9,601.8 1242.3,594.5 1248.8,611.0 1223.4,618.3" fill="#9b7b6e" />
<polygon points="761.0,734.1 748.8,737.6 756.0,759.6 768.2,756.1" fill="#a9a9a9" />
<polygon points="787.7,726.4 799.8,722.9 807.1,744.8 795.0,748.3" fill="#a9a9a9" />
<polygon points="756.0,738.0 756.2,734.9 794.6,723.9 800.5,741.5 800.0,744.4 761.7,755.6" fill="#0e0e0e" />
<polygon points="756.2,734.9 794.6,723.9 800.5,741.5 762.0,752.6" fill="#e6e2d2" />
<polygon points="761.3,733.5 789.5,725.3 795.3,742.9 767.1,751.1" fill="#9b7b6e" />
<polygon points="1439.5,548.6 1424.2,553.0 1433.5,575.4 1448.9,570.9" fill="#a9a9a9" />
<polygon points="1470.0,539.8 1485.2,535.4 1494.6,557.5 1479.4,562.0" fill="#a9a9a9" />
<polygon points="1433.3,551.2 1436.0,548.1 1479.7,535.4 1488.5,556.3 1485.7,559.4 1442.0,572.1" fill="#0e0e0e" />
<polygon points="1435.9,548.1 1479.7,535.4 1488.5,556.3 1444.7,569.1" fill="#e6e2d2" />
<polygon points="1440.6,546.7 1475.1,536.8 1483.9,557.6 1449.4,567.7" fill="#1c1c1c" />
<polygon points="834.1,729.4 822.1,732.9 829.5,754.8 841.5,751.3" fill="#a9a9a9" />
<polygon points="860.5,721.8 872.4,718.3 879.8,740.1 867.9,743.6" fill="#a9a9a9" />
<polygon points="829.2,733.3 829.7,730.2 867.6,719.3 873.6,736.7 872.8,739.7 835.0,750.8" fill="#0e0e0e" />
<polygon points="829.7,730.2 867.6,719.3 873.6,736.7 835.7,747.8" fill="#e6e2d2" />
<polygon points="834.8,728.8 862.6,720.7 868.5,738.2 840.7,746.3" fill="#9b7b6e" />
<polygon points="1284.0,602.1 1273.2,605.2 1281.3,625.7 1292.1,622.5" fill="#a9a9a9" />
<polygon points="1307.8,595.2 1318.5,592.0 1326.7,612.4 1316.0,615.5" fill="#a9a9a9" />
<polygon points="1279.7,605.6 1282.2,602.2 1316.3,592.3 1322.9,608.6 1320.2,612.0 1286.2,622.0" fill="#0e0e0e" />
<polygon points="1282.2,602.2 1316.3,592.3 1322.9,608.6 1288.7,618.6" fill="#e6e2d2" />
<polygon points="1286.7,600.9 1311.8,593.6 1318.3,609.9 1293.3,617.3" fill="#9b7b6e" />
<polygon points="1136.2,683.0 1166.8,673.9 1165.3,669.9 1134.7,678.9" fill="#cdb214" />
<polygon points="1141.9,698.2 1172.6,689.0 1174.1,693.0 1143.4,702.2" fill="#cdb214" />
<polygon points="1137.0,681.8 1139.4,677.8 1167.9,669.4 1174.3,686.3 1171.7,690.2 1143.4,698.6" fill="#060606" />
<polygon points="1139.4,677.8 1167.9,669.4 1174.3,686.3 1145.8,694.8" fill="#3d393b" />
<polyline points="1149.8,684.2 1158.7,669.7" fill="none" stroke="#3a2a1a" stroke-width="5.5" stroke-linejoin="round" stroke-linecap="round" stroke-linecap="butt"/>
<circle cx="1158.7" cy="669.7" r="3.2" fill="#e2c48c"/>
<polygon points="669.9,815.1 679.2,844.5 674.2,846.0 664.9,816.6" fill="#cdb214" />
<polygon points="688.8,809.6 698.1,838.9 703.1,837.4 693.8,808.1" fill="#cdb214" />
<polygon points="669.0,813.2 690.1,807.0 698.8,834.2 698.8,837.5 677.8,843.7 669.2,816.5" fill="#060606" />
<polygon points="669.0,813.2 677.6,840.5 698.8,834.2 690.1,807.0" fill="#3d393b" />
<polyline points="681.8,816.9 681.4,804.4" fill="none" stroke="#3a2a1a" stroke-width="5.5" stroke-linejoin="round" stroke-linecap="round" stroke-linecap="butt"/>
<circle cx="681.4" cy="804.4" r="3.2" fill="#e2c48c"/>
<polygon points="1050.2,725.6 1060.4,753.6 1055.8,755.0 1045.6,727.0" fill="#cdb214" />
<polygon points="1067.6,720.5 1077.8,748.4 1082.4,747.0 1072.2,719.1" fill="#cdb214" />
<polygon points="1049.6,727.0 1051.6,723.2 1071.0,717.5 1080.5,743.4 1078.4,747.0 1059.0,752.8" fill="#060606" />
<polygon points="1051.6,723.2 1061.0,749.2 1080.5,743.4 1071.0,717.5" fill="#3d393b" />
<polyline points="1063.6,726.8 1071.0,713.0" fill="none" stroke="#3a2a1a" stroke-width="5.5" stroke-linejoin="round" stroke-linecap="round" stroke-linecap="butt"/>
<circle cx="1071.0" cy="713.0" r="3.2" fill="#e2c48c"/>
<polygon points="1484.3,607.2 1512.7,598.7 1511.1,594.9 1482.7,603.4" fill="#cdb214" />
<polygon points="1490.5,621.7 1518.8,613.2 1520.4,617.0 1492.1,625.5" fill="#cdb214" />
<polygon points="1485.1,606.1 1489.2,601.9 1515.5,594.0 1522.4,610.2 1518.1,614.3 1491.9,622.2" fill="#060606" />
<polygon points="1489.2,601.9 1515.5,594.0 1522.4,610.2 1496.1,618.1" fill="#3d393b" />
<polyline points="1499.2,608.0 1514.6,592.6" fill="none" stroke="#3a2a1a" stroke-width="5.5" stroke-linejoin="round" stroke-linecap="round" stroke-linecap="butt"/>
<circle cx="1514.6" cy="592.6" r="3.2" fill="#e2c48c"/>
<polygon points="464.4,907.3 473.2,937.9 467.9,939.5 459.1,908.9" fill="#cdb214" />
<polygon points="484.2,901.4 493.0,931.9 498.3,930.3 489.4,899.9" fill="#cdb214" />
<polygon points="462.2,905.9 484.4,899.3 485.7,902.3 493.8,930.4 471.7,937.0 470.4,934.3" fill="#060606" />
<polygon points="462.2,905.9 470.4,934.3 492.6,927.6 484.4,899.3" fill="#3d393b" />
<polyline points="475.4,909.6 470.5,898.9" fill="none" stroke="#3a2a1a" stroke-width="5.5" stroke-linejoin="round" stroke-linecap="round" stroke-linecap="butt"/>
<circle cx="470.5" cy="898.9" r="3.2" fill="#e2c48c"/>
<polygon points="582.8,874.4 591.9,904.5 586.7,906.0 577.7,875.9" fill="#cdb214" />
<polygon points="602.1,868.6 611.2,898.6 616.3,897.1 607.2,867.1" fill="#cdb214" />
<polygon points="581.4,872.8 603.0,866.3 611.5,894.2 612.0,897.1 590.4,903.6 582.0,875.9" fill="#060606" />
<polygon points="581.4,872.8 589.8,900.7 611.5,894.2 603.0,866.3" fill="#3d393b" />
<polyline points="594.3,876.5 592.0,865.1" fill="none" stroke="#3a2a1a" stroke-width="5.5" stroke-linejoin="round" stroke-linecap="round" stroke-linecap="butt"/>
<circle cx="592.0" cy="865.1" r="3.2" fill="#e2c48c"/>
<polygon points="407.8,926.8 416.5,957.7 411.1,959.3 402.5,928.4" fill="#cdb214" />
<polygon points="427.9,920.8 436.6,951.6 441.9,950.0 433.2,919.3" fill="#cdb214" />
<polygon points="405.3,925.5 427.8,918.8 429.4,921.7 437.4,950.1 415.0,956.8 413.3,954.1" fill="#060606" />
<polygon points="405.3,925.5 413.3,954.1 435.8,947.3 427.8,918.8" fill="#3d393b" />
<polyline points="418.5,929.3 412.4,918.8" fill="none" stroke="#3a2a1a" stroke-width="5.5" stroke-linejoin="round" stroke-linecap="round" stroke-linecap="butt"/>
<circle cx="412.4" cy="918.8" r="3.2" fill="#e2c48c"/>
<polygon points="523.8,892.5 532.8,922.8 527.6,924.4 518.6,894.1" fill="#cdb214" />
<polygon points="543.4,886.7 552.4,916.9 557.6,915.3 548.6,885.1" fill="#cdb214" />
<polygon points="522.0,891.0 543.9,884.5 544.9,887.5 553.1,915.4 531.3,922.0 530.3,919.1" fill="#060606" />
<polygon points="522.0,891.0 530.3,919.1 552.3,912.5 543.9,884.5" fill="#3d393b" />
<polyline points="535.1,894.7 531.5,883.7" fill="none" stroke="#3a2a1a" stroke-width="5.5" stroke-linejoin="round" stroke-linecap="round" stroke-linecap="butt"/>
<circle cx="531.5" cy="883.7" r="3.2" fill="#e2c48c"/>
<polygon points="1014.0,773.1 1010.3,762.7 1034.7,755.4 1038.4,765.7" fill="#a9a9a9" />
<polygon points="1022.1,796.0 1025.9,806.4 1050.4,798.9 1046.6,788.5" fill="#a9a9a9" />
<polygon points="1014.7,767.4 1016.1,764.6 1035.7,758.7 1047.5,791.5 1046.0,794.2 1026.4,800.2" fill="#0e0e0e" />
<polygon points="1016.1,764.6 1027.8,797.5 1047.5,791.5 1035.7,758.7" fill="#e6e2d2" />
<polygon points="1017.6,769.0 1026.2,793.1 1045.9,787.1 1037.3,763.0" fill="#9b7b6e" />
<polygon points="1452.5,641.4 1448.5,631.8 1470.5,625.2 1474.6,634.8" fill="#a9a9a9" />
<polygon points="1461.4,662.9 1465.5,672.6 1487.6,665.9 1483.5,656.2" fill="#a9a9a9" />
<polygon points="1452.8,636.2 1456.0,633.0 1473.7,627.6 1486.5,658.3 1483.2,661.4 1465.5,666.8" fill="#0e0e0e" />
<polygon points="1456.0,632.9 1468.8,663.7 1486.5,658.3 1473.7,627.6" fill="#e6e2d2" />
<polygon points="1457.7,637.0 1467.1,659.6 1484.8,654.2 1475.4,631.7" fill="#9b7b6e" />
<polygon points="470.5,956.3 506.5,945.4 505.2,941.0 469.2,951.8" fill="#cdb214" />
<polygon points="475.4,973.4 511.4,962.5 512.7,967.0 476.7,978.0" fill="#cdb214" />
<polygon points="470.3,952.3 503.7,942.2 504.8,944.9 510.3,963.8 477.1,974.0 475.8,971.4" fill="#060606" />
<polygon points="470.3,952.3 503.7,942.2 509.2,961.2 475.8,971.4" fill="#3d393b" />
<polyline points="481.4,959.3 476.6,949.5" fill="none" stroke="#3a2a1a" stroke-width="5.5" stroke-linejoin="round" stroke-linecap="round" stroke-linecap="butt"/>
<circle cx="476.6" cy="949.5" r="3.2" fill="#e2c48c"/>
<polygon points="531.0,940.1 566.5,929.4 565.2,924.9 529.7,935.7" fill="#cdb214" />
<polygon points="536.0,957.1 571.5,946.2 572.9,950.7 537.3,961.6" fill="#cdb214" />
<polygon points="531.1,936.0 564.1,926.0 569.7,944.9 570.5,947.6 537.6,957.6 536.7,955.0" fill="#060606" />
<polygon points="531.1,936.0 564.1,926.0 569.7,944.9 536.7,955.0" fill="#3d393b" />
<polyline points="542.2,943.0 538.7,932.9" fill="none" stroke="#3a2a1a" stroke-width="5.5" stroke-linejoin="round" stroke-linecap="round" stroke-linecap="butt"/>
<circle cx="538.7" cy="932.9" r="3.2" fill="#e2c48c"/>
<polygon points="1506.6,658.7 1535.0,650.0 1533.4,646.2 1504.9,654.9" fill="#cdb214" />
<polygon points="1512.8,673.4 1541.2,664.7 1542.9,668.5 1514.4,677.3" fill="#cdb214" />
<polygon points="1507.3,657.6 1511.6,653.6 1537.9,645.6 1544.9,661.9 1540.5,665.8 1514.2,673.9" fill="#060606" />
<polygon points="1511.6,653.6 1537.9,645.6 1544.9,661.9 1518.5,670.0" fill="#3d393b" />
<polyline points="1521.6,659.8 1537.6,645.3" fill="none" stroke="#3a2a1a" stroke-width="5.5" stroke-linejoin="round" stroke-linecap="round" stroke-linecap="butt"/>
<circle cx="1537.6" cy="645.3" r="3.2" fill="#e2c48c"/>
<polygon points="1070.7,786.4 1081.0,814.8 1076.4,816.2 1066.1,787.8" fill="#cdb214" />
<polygon points="1088.2,781.1 1098.5,809.4 1103.1,808.0 1092.8,779.7" fill="#cdb214" />
<polygon points="1070.1,787.8 1072.2,784.4 1091.7,778.4 1101.3,804.7 1099.1,808.0 1079.6,814.0" fill="#060606" />
<polygon points="1072.2,784.4 1081.8,810.7 1101.3,804.7 1091.7,778.4" fill="#3d393b" />
<polyline points="1084.3,787.9 1092.2,775.3" fill="none" stroke="#3a2a1a" stroke-width="5.5" stroke-linejoin="round" stroke-linecap="round" stroke-linecap="butt"/>
<circle cx="1092.2" cy="775.3" r="3.2" fill="#e2c48c"/>
<polygon points="701.2,914.7 710.7,944.8 705.7,946.4 696.2,916.2" fill="#cdb214" />
<polygon points="720.3,908.9 729.8,938.9 734.8,937.4 725.3,907.3" fill="#cdb214" />
<polygon points="700.5,916.2 700.5,913.3 721.8,906.8 730.7,934.7 730.5,937.4 709.3,944.0" fill="#060606" />
<polygon points="700.5,913.3 709.3,941.3 730.7,934.7 721.8,906.8" fill="#3d393b" />
<polyline points="713.4,917.0 713.7,906.6" fill="none" stroke="#3a2a1a" stroke-width="5.5" stroke-linejoin="round" stroke-linecap="round" stroke-linecap="butt"/>
<circle cx="713.7" cy="906.6" r="3.2" fill="#e2c48c"/>
<polygon points="1172.0,778.2 1202.9,768.7 1201.3,764.6 1170.5,774.1" fill="#cdb214" />
<polygon points="1177.9,793.8 1208.8,784.2 1210.3,788.3 1179.4,797.9" fill="#cdb214" />
<polygon points="1172.9,777.0 1175.5,773.5 1204.1,764.7 1210.7,782.0 1207.9,785.4 1179.4,794.2" fill="#060606" />
<polygon points="1175.5,773.5 1204.1,764.7 1210.7,782.0 1182.0,790.9" fill="#3d393b" />
<polyline points="1185.9,780.0 1195.8,767.3" fill="none" stroke="#3a2a1a" stroke-width="5.5" stroke-linejoin="round" stroke-linecap="round" stroke-linecap="butt"/>
<circle cx="1195.8" cy="767.3" r="3.2" fill="#e2c48c"/>
<polygon points="1091.0,844.8 1101.4,873.6 1096.8,875.1 1086.3,846.2" fill="#cdb214" />
<polygon points="1108.5,839.3 1119.0,868.0 1123.7,866.6 1113.2,837.9" fill="#cdb214" />
<polygon points="1090.4,846.2 1092.6,843.1 1112.2,836.9 1122.0,863.6 1119.6,866.6 1100.1,872.8" fill="#060606" />
<polygon points="1092.6,843.1 1102.3,869.8 1122.0,863.6 1112.2,836.9" fill="#3d393b" />
<polyline points="1104.8,846.7 1113.2,835.1" fill="none" stroke="#3a2a1a" stroke-width="5.5" stroke-linejoin="round" stroke-linecap="round" stroke-linecap="butt"/>
<circle cx="1113.2" cy="835.1" r="3.2" fill="#e2c48c"/>
<polygon points="1531.8,722.5 1560.4,713.5 1558.7,709.6 1530.2,718.5" fill="#cdb214" />
<polygon points="1538.1,737.4 1566.7,728.3 1568.4,732.3 1539.8,741.3" fill="#cdb214" />
<polygon points="1532.6,721.3 1537.0,717.6 1563.5,709.3 1570.6,725.9 1566.0,729.5 1539.6,737.9" fill="#060606" />
<polygon points="1537.0,717.6 1563.5,709.3 1570.6,725.9 1544.1,734.3" fill="#3d393b" />
<polyline points="1547.2,723.9 1563.7,710.5" fill="none" stroke="#3a2a1a" stroke-width="5.5" stroke-linejoin="round" stroke-linecap="round" stroke-linecap="butt"/>
<circle cx="1563.7" cy="710.5" r="3.2" fill="#e2c48c"/>
<polygon points="721.0,977.8 730.6,1008.3 725.5,1010.0 715.9,979.4" fill="#cdb214" />
<polygon points="740.1,971.8 749.8,1002.2 754.9,1000.6 745.2,970.2" fill="#cdb214" />
<polygon points="720.3,979.3 720.4,976.8 741.8,970.1 750.8,998.4 750.5,1000.7 729.2,1007.5" fill="#060606" />
<polygon points="720.4,976.8 729.4,1005.2 750.8,998.4 741.8,970.1" fill="#3d393b" />
<polyline points="733.4,980.5 734.1,971.3" fill="none" stroke="#3a2a1a" stroke-width="5.5" stroke-linejoin="round" stroke-linecap="round" stroke-linecap="butt"/>
<circle cx="734.1" cy="971.3" r="3.2" fill="#e2c48c"/>
<polygon points="1196.5,836.6 1227.5,826.9 1225.9,822.7 1194.9,832.5" fill="#cdb214" />
<polygon points="1202.4,852.4 1233.5,842.6 1235.0,846.7 1204.0,856.6" fill="#cdb214" />
<polygon points="1197.4,835.4 1200.1,832.2 1228.9,823.2 1235.5,840.7 1232.6,843.8 1204.0,852.9" fill="#060606" />
<polygon points="1200.1,832.2 1228.9,823.2 1235.5,840.7 1206.8,849.8" fill="#3d393b" />
<polyline points="1210.7,838.7 1221.1,827.1" fill="none" stroke="#3a2a1a" stroke-width="5.5" stroke-linejoin="round" stroke-linecap="round" stroke-linecap="butt"/>
<circle cx="1221.1" cy="827.1" r="3.2" fill="#e2c48c"/>
<polygon points="844.0,994.9 831.5,998.9 839.2,1022.4 851.6,1018.3" fill="#a9a9a9" />
<polygon points="871.3,986.2 883.6,982.2 891.4,1005.5 879.0,1009.5" fill="#a9a9a9" />
<polygon points="838.9,999.1 839.5,997.2 878.7,984.7 885.0,1003.4 884.1,1005.2 845.0,1017.9" fill="#0e0e0e" />
<polygon points="839.5,997.2 878.7,984.7 885.0,1003.4 845.7,1016.1" fill="#e6e2d2" />
<polygon points="844.7,995.6 873.5,986.3 879.7,1005.1 850.9,1014.4" fill="#9b7b6e" />
<polygon points="1311.9,845.7 1300.7,849.3 1309.2,871.1 1320.3,867.5" fill="#a9a9a9" />
<polygon points="1336.4,837.8 1347.5,834.3 1356.0,855.9 1344.9,859.5" fill="#a9a9a9" />
<polygon points="1307.4,849.5 1310.1,847.1 1345.3,835.8 1352.2,853.2 1349.3,855.6 1314.2,867.0" fill="#0e0e0e" />
<polygon points="1310.1,847.1 1345.3,835.8 1352.2,853.2 1316.9,864.6" fill="#e6e2d2" />
<polygon points="1314.8,845.6 1340.6,837.3 1347.5,854.7 1321.6,863.1" fill="#9b7b6e" />
<polygon points="1027.3,935.5 1009.7,941.1 1018.7,966.7 1036.3,961.0" fill="#a9a9a9" />
<polygon points="1062.2,924.3 1079.6,918.8 1088.7,944.1 1071.3,949.7" fill="#a9a9a9" />
<polygon points="1020.1,938.7 1021.3,936.8 1071.4,920.8 1080.0,944.6 1078.4,946.5 1028.5,962.6" fill="#0e0e0e" />
<polygon points="1021.3,936.8 1071.4,920.8 1079.9,944.6 1029.8,960.9" fill="#e6e2d2" />
<polygon points="1026.6,935.2 1066.2,922.5 1074.7,946.3 1035.1,959.2" fill="#1c1c1c" />
<polygon points="1475.2,794.2 1459.4,799.3 1469.1,823.1 1484.9,818.0" fill="#a9a9a9" />
<polygon points="1506.6,784.1 1522.2,779.1 1532.1,802.7 1516.4,807.8" fill="#a9a9a9" />
<polygon points="1468.7,797.1 1471.6,794.8 1516.7,780.4 1525.9,802.6 1522.8,804.9 1477.8,819.4" fill="#0e0e0e" />
<polygon points="1471.6,794.8 1516.7,780.4 1525.9,802.6 1480.8,817.2" fill="#e6e2d2" />
<polygon points="1476.4,793.3 1512.0,781.9 1521.2,804.1 1485.6,815.7" fill="#1c1c1c" />
<g><path d="M66 1246 L84 1243 L92 1262 L72 1264 Z" fill="#10f010"/><ellipse cx="71" cy="1249" rx="14.5" ry="6" transform="rotate(-22 71 1249)" fill="#0a8a0a"/><path d="M62.5 1225.8 L85 1244 C 80 1248 64 1254 57.4 1253.8 Z" fill="#12ee12"/><path d="M96 1264 L113 1262 L124 1280 L100 1287 Z" fill="#f01010"/><ellipse cx="116" cy="1272.5" rx="6" ry="14" transform="rotate(-20 116 1272.5)" fill="#9a0808"/><path d="M142.4 1264.4 L110.8 1259 C 114 1268 118 1280 121 1286 Z" fill="#fa1010"/><polygon points="80,1252 96,1252 104,1257 106,1265 106,1276 103,1284 96,1289 80,1289 73,1284 70,1276 70,1265 73,1257" fill="#0808b4"/></g></svg>
</div>
<div id="status">
  <span style="left:4px">Render time 16 ms ( 62.6 fps)</span>
  <div class="sep" style="left:1480px"></div>
  <span style="left:1485px">dx 0.00</span>
  <div class="sep" style="left:1620px"></div>
  <span style="left:1625px">dy 0.00</span>
  <div class="sep" style="left:1760px"></div>
  <svg style="position:absolute;left:1944px;top:20px" width="14" height="14">
    <g fill="#a8a8a8"><rect x="9" y="1" width="3" height="3"/><rect x="5" y="5" width="3" height="3"/><rect x="9" y="5" width="3" height="3"/><rect x="1" y="9" width="3" height="3"/><rect x="5" y="9" width="3" height="3"/><rect x="9" y="9" width="3" height="3"/></g>
  </svg>
</div>
</body></html>
